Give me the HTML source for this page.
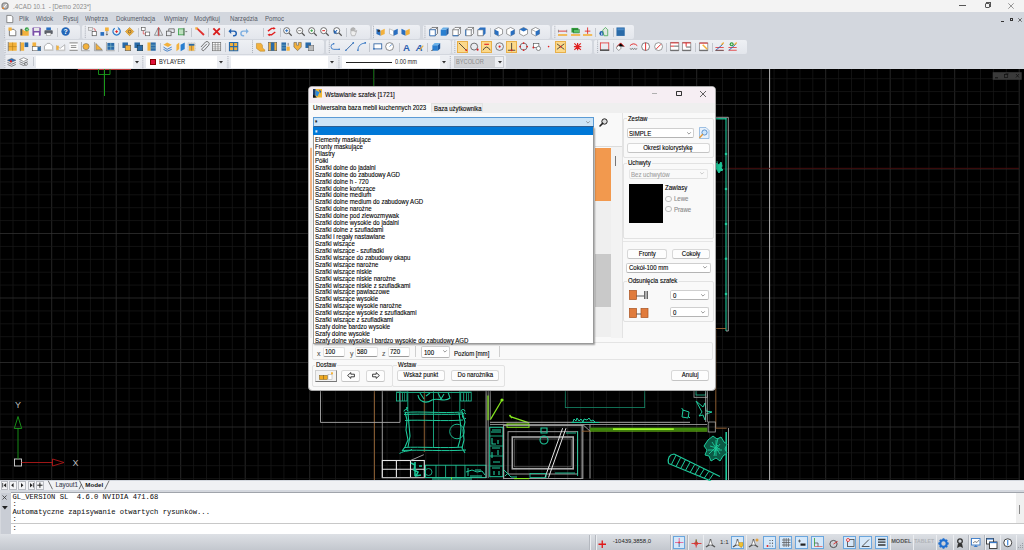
<!DOCTYPE html><html><head><meta charset="utf-8"><style>
*{margin:0;padding:0;box-sizing:border-box}
html,body{width:1024px;height:550px;overflow:hidden;background:#d3d7de;font-family:"Liberation Sans",sans-serif}
.a{position:absolute}
.t{position:absolute;white-space:pre;line-height:1}
.s{-webkit-text-stroke:0.06px currentColor}
svg{position:absolute;overflow:visible}
</style></head><body>
<div class="a" style="left:0px;top:0px;width:1024px;height:12px;background:#f3f3f3"></div>
<div class="t" style="left:13.2px;top:2.6px;font-size:7.0px;color:#8c8c8c;transform:scaleX(0.893);transform-origin:0 0">.4CAD 10.1  - [Demo 2023*]</div>
<div class="a" style="left:0px;top:12px;width:1024px;height:57px;background:#d3d7de"></div>
<div class="t" style="left:18.7px;top:15.6px;font-size:6.7px;color:#555a66;transform:scaleX(0.915);transform-origin:0 0">Plik</div>
<div class="t" style="left:36.3px;top:15.6px;font-size:6.7px;color:#555a66;transform:scaleX(0.915);transform-origin:0 0">Widok</div>
<div class="t" style="left:62.7px;top:15.6px;font-size:6.7px;color:#555a66;transform:scaleX(0.915);transform-origin:0 0">Rysuj</div>
<div class="t" style="left:84.6px;top:15.6px;font-size:6.7px;color:#555a66;transform:scaleX(0.915);transform-origin:0 0">Wnętrza</div>
<div class="t" style="left:116.2px;top:15.6px;font-size:6.7px;color:#555a66;transform:scaleX(0.915);transform-origin:0 0">Dokumentacja</div>
<div class="t" style="left:163.6px;top:15.6px;font-size:6.7px;color:#555a66;transform:scaleX(0.915);transform-origin:0 0">Wymiary</div>
<div class="t" style="left:194.4px;top:15.6px;font-size:6.7px;color:#555a66;transform:scaleX(0.915);transform-origin:0 0">Modyfikuj</div>
<div class="t" style="left:230px;top:15.6px;font-size:6.7px;color:#555a66;transform:scaleX(0.915);transform-origin:0 0">Narzędzia</div>
<div class="t" style="left:264.7px;top:15.6px;font-size:6.7px;color:#555a66;transform:scaleX(0.915);transform-origin:0 0">Pomoc</div>
<div class="a" style="left:4px;top:24.5px;width:76px;height:14.5px;background:linear-gradient(#eef0f4,#e3e6ec);border-radius:2px"></div>
<div class="a" style="left:82px;top:24.5px;width:288px;height:14.5px;background:linear-gradient(#eef0f4,#e3e6ec);border-radius:2px"></div>
<div class="a" style="left:372px;top:24.5px;width:48px;height:14.5px;background:linear-gradient(#eef0f4,#e3e6ec);border-radius:2px"></div>
<div class="a" style="left:423px;top:24.5px;width:127px;height:14.5px;background:linear-gradient(#eef0f4,#e3e6ec);border-radius:2px"></div>
<div class="a" style="left:552px;top:24.5px;width:82px;height:14.5px;background:linear-gradient(#eef0f4,#e3e6ec);border-radius:2px"></div>
<div class="a" style="left:4px;top:39.5px;width:320px;height:14px;background:linear-gradient(#eef0f4,#e3e6ec);border-radius:2px"></div>
<div class="a" style="left:326px;top:39.5px;width:125px;height:14px;background:linear-gradient(#eef0f4,#e3e6ec);border-radius:2px"></div>
<div class="a" style="left:452px;top:39.5px;width:140px;height:14px;background:linear-gradient(#eef0f4,#e3e6ec);border-radius:2px"></div>
<div class="a" style="left:594px;top:39.5px;width:153px;height:14px;background:linear-gradient(#eef0f4,#e3e6ec);border-radius:2px"></div>
<div class="a" style="left:4px;top:54.5px;width:502px;height:14px;background:linear-gradient(#eef0f4,#e3e6ec);border-radius:2px"></div>
<svg style="left:0;top:0" width="1024" height="80"><rect x="4.2" y="25.8" width="0.9" height="0.9" fill="#9da2ab"/><rect x="4.2" y="27.7" width="0.9" height="0.9" fill="#9da2ab"/><rect x="4.2" y="29.6" width="0.9" height="0.9" fill="#9da2ab"/><rect x="4.2" y="31.5" width="0.9" height="0.9" fill="#9da2ab"/><rect x="4.2" y="33.4" width="0.9" height="0.9" fill="#9da2ab"/><rect x="4.2" y="35.3" width="0.9" height="0.9" fill="#9da2ab"/><rect x="4.2" y="37.2" width="0.9" height="0.9" fill="#9da2ab"/></svg>
<svg style="left:8px;top:27.4px" width="9.2" height="9.2" viewBox="0 0 10 10"><path d="M1.5 2.5h5l2 2v5h-7z" fill="#fff" stroke="#555" stroke-width="0.8"/><rect x="0.5" y="0.5" width="3.5" height="3.5" fill="#f3b13c"/></svg>
<svg style="left:19.8px;top:27.4px" width="9.2" height="9.2" viewBox="0 0 10 10"><path d="M0.5 3h3l1 1h5v5.5h-9z" fill="#f3b13c"/><path d="M0.5 2h2v7h-2z" fill="#555"/><circle cx="7.5" cy="2.5" r="2.3" fill="#3aa34a"/><path d="M6.7 2.5l1.3 1 1-2" stroke="#fff" stroke-width="0.6" fill="none"/></svg>
<svg style="left:32px;top:27.4px" width="9.2" height="9.2" viewBox="0 0 10 10"><rect x="0.5" y="0.5" width="9" height="9" rx="0.8" fill="#7a4ea8"/><rect x="2" y="1" width="6" height="3.3" fill="#e8e8e8"/><rect x="2.5" y="6" width="5" height="3.5" fill="#fff"/></svg>
<svg style="left:44px;top:27.4px" width="9.2" height="9.2" viewBox="0 0 10 10"><rect x="2.5" y="0.5" width="5" height="3" fill="#2a6fc0"/><rect x="0.5" y="3.5" width="9" height="4" rx="0.8" fill="#5c6068"/><rect x="2.5" y="6.5" width="5" height="3" fill="#fff" stroke="#777" stroke-width="0.5"/></svg>
<div class="a" style="left:56.7px;top:28px;width:0.8px;height:9px;background:#c3c7ce"></div>
<svg style="left:60.6px;top:27.2px" width="9.2" height="9.2" viewBox="0 0 10 10"><circle cx="5" cy="5" r="4.6" fill="#2266b8"/><text x="5" y="7.8" font-size="7.5" font-weight="bold" text-anchor="middle" fill="#fff" font-family="Liberation Sans">?</text></svg>
<svg style="left:0;top:0" width="1024" height="80"><rect x="84.8" y="25.8" width="0.9" height="0.9" fill="#9da2ab"/><rect x="84.8" y="27.7" width="0.9" height="0.9" fill="#9da2ab"/><rect x="84.8" y="29.6" width="0.9" height="0.9" fill="#9da2ab"/><rect x="84.8" y="31.5" width="0.9" height="0.9" fill="#9da2ab"/><rect x="84.8" y="33.4" width="0.9" height="0.9" fill="#9da2ab"/><rect x="84.8" y="35.3" width="0.9" height="0.9" fill="#9da2ab"/><rect x="84.8" y="37.2" width="0.9" height="0.9" fill="#9da2ab"/></svg>
<svg style="left:88.2px;top:27.4px" width="9.2" height="9.2" viewBox="0 0 10 10"><rect x="0.5" y="0.5" width="4.5" height="3" fill="#eee" stroke="#888" stroke-width="0.6"/><rect x="4.5" y="5" width="4.5" height="4.5" fill="#fff" stroke="#444" stroke-width="0.7"/><path d="M6 1.5q2 0 2 3" stroke="#e02020" stroke-width="0.7" fill="none"/></svg>
<svg style="left:100.2px;top:27.4px" width="9.2" height="9.2" viewBox="0 0 10 10"><rect x="0.5" y="5.5" width="4" height="4" fill="#2a6fc0"/><rect x="5.5" y="0.5" width="4" height="4" fill="#f3b13c"/><path d="M7.5 4.5v4M6.5 7.5l1 1.5 1-1.5" stroke="#333" stroke-width="0.6" fill="none"/></svg>
<svg style="left:111.8px;top:27.4px" width="9.2" height="9.2" viewBox="0 0 10 10"><path d="M3 1.3A4 4 0 1 0 7 1.3" stroke="#2a78c8" stroke-width="1.3" fill="none"/><path d="M6.2 0.3L7.8 1.5 6.5 3" stroke="#2a78c8" stroke-width="0.9" fill="none"/><path d="M3.5 5h3M5 3.5v3" stroke="#e02020" stroke-width="1"/></svg>
<svg style="left:124.8px;top:27.4px" width="9.2" height="9.2" viewBox="0 0 10 10"><path d="M5 0.5L9.5 5L5 9.5L0.5 5z" fill="#f3b13c" stroke="#b07a10" stroke-width="0.6"/><circle cx="5" cy="5" r="1.5" fill="none" stroke="#333" stroke-width="0.6"/></svg>
<div class="a" style="left:138px;top:28px;width:0.8px;height:9px;background:#c3c7ce"></div>
<svg style="left:140.6px;top:27.4px" width="9.2" height="9.2" viewBox="0 0 10 10"><rect x="0.5" y="0.5" width="4" height="3.5" fill="#fff" stroke="#555" stroke-width="0.7"/><rect x="5" y="5.5" width="4.5" height="4" fill="#fff" stroke="#555" stroke-width="0.7"/><path d="M2.5 4v3.5h2.5" stroke="#e02020" stroke-width="0.6" fill="none"/></svg>
<svg style="left:153.8px;top:27.4px" width="9.2" height="9.2" viewBox="0 0 10 10"><path d="M4.5 1L0.5 9h4z" fill="none" stroke="#666" stroke-width="0.7"/><path d="M5.5 1L9.5 9h-4z" fill="none" stroke="#666" stroke-width="0.7"/><path d="M5 0v10" stroke="#e02020" stroke-width="0.7"/></svg>
<svg style="left:166px;top:27.4px" width="9.2" height="9.2" viewBox="0 0 10 10"><rect x="0.5" y="4.5" width="5" height="5" fill="none" stroke="#555" stroke-width="0.8"/><path d="M3 4.5v-2.5h6v4h-3.5" fill="none" stroke="#555" stroke-width="0.8"/></svg>
<svg style="left:178.4px;top:27.4px" width="9.2" height="9.2" viewBox="0 0 10 10"><rect x="0.5" y="2" width="6" height="6.5" fill="#bfe0c0" stroke="#3aa34a" stroke-width="0.9"/><path d="M6.5 1v8.5" stroke="#555" stroke-width="0.8"/><path d="M8 5h2" stroke="#555" stroke-width="0.8"/></svg>
<div class="a" style="left:190.7px;top:28px;width:0.8px;height:9px;background:#c3c7ce"></div>
<svg style="left:195px;top:27.4px" width="9.2" height="9.2" viewBox="0 0 10 10"><path d="M1 1.5l1.5-1 8 7.5-1.5 1.5z" fill="#e03030"/><rect x="0.3" y="0.3" width="2.5" height="2.5" fill="#f3b13c"/></svg>
<div class="a" style="left:208.3px;top:28px;width:0.8px;height:9px;background:#c3c7ce"></div>
<svg style="left:211.8px;top:27.4px" width="9.2" height="9.2" viewBox="0 0 10 10"><path d="M1.5 1.5l7 7M8.5 1.5l-7 7" stroke="#d81e1e" stroke-width="2"/></svg>
<div class="a" style="left:224px;top:28px;width:0.8px;height:9px;background:#c3c7ce"></div>
<svg style="left:227.6px;top:27.4px" width="9.2" height="9.2" viewBox="0 0 10 10"><path d="M2.5 4.5h4a2.5 2.5 0 0 1 0 5h-1" stroke="#1f5fb0" stroke-width="1.6" fill="none"/><path d="M0.5 4.5l3-3v6z" fill="#1f5fb0"/></svg>
<svg style="left:240px;top:27.4px" width="9.2" height="9.2" viewBox="0 0 10 10"><path d="M7.5 4.5h-4a2.5 2.5 0 0 0 0 5h1" stroke="#7fb0e0" stroke-width="1.6" fill="none"/><path d="M9.5 4.5l-3-3v6z" fill="#7fb0e0"/></svg>
<div class="a" style="left:263px;top:28px;width:0.8px;height:9px;background:#c3c7ce"></div>
<svg style="left:266.7px;top:27.4px" width="9.2" height="9.2" viewBox="0 0 10 10"><path d="M1 4.5l4-3h3" stroke="#e02020" stroke-width="1.5" fill="none"/><path d="M9 5.5l-4 3h-3" stroke="#e02020" stroke-width="1.5" fill="none"/><path d="M7 0l2.5 1.5L7 3z M3 10L0.5 8.5 3 7z" fill="#e02020"/></svg>
<div class="a" style="left:280px;top:28px;width:0.8px;height:9px;background:#c3c7ce"></div>
<svg style="left:283.4px;top:27.4px" width="9.2" height="9.2" viewBox="0 0 10 10"><circle cx="4" cy="4" r="3.3" fill="#fff" stroke="#555" stroke-width="0.9"/><path d="M6.5 6.5l3 3" stroke="#555" stroke-width="1.3"/><path d="M2.3 4h3.4M4 2.3v3.4" stroke="#2a6fc0" stroke-width="1"/></svg>
<svg style="left:295.7px;top:27.4px" width="9.2" height="9.2" viewBox="0 0 10 10"><circle cx="4" cy="4" r="3.3" fill="#fff" stroke="#555" stroke-width="0.9"/><path d="M6.5 6.5l3 3" stroke="#555" stroke-width="1.3"/><path d="M2.3 4h3.4" stroke="#888" stroke-width="1"/></svg>
<svg style="left:308px;top:27.4px" width="9.2" height="9.2" viewBox="0 0 10 10"><circle cx="4" cy="4" r="3.3" fill="#fff" stroke="#555" stroke-width="0.9"/><path d="M6.5 6.5l3 3" stroke="#555" stroke-width="1.3"/><path d="M2.5 4h3M4 2.5v3" stroke="#3aa34a" stroke-width="1"/></svg>
<svg style="left:320.3px;top:27.4px" width="9.2" height="9.2" viewBox="0 0 10 10"><circle cx="4" cy="4" r="3.3" fill="#fff" stroke="#555" stroke-width="0.9"/><path d="M6.5 6.5l3 3" stroke="#555" stroke-width="1.3"/><path d="M2.5 4h3" stroke="#e02020" stroke-width="1.1"/></svg>
<svg style="left:332.6px;top:27.4px" width="9.2" height="9.2" viewBox="0 0 10 10"><circle cx="4" cy="4" r="3.3" fill="#fff" stroke="#555" stroke-width="0.9"/><path d="M6.5 6.5l3 3" stroke="#555" stroke-width="1.3"/><path d="M1.5 6.5l3-3M1.5 3.5v3h3" stroke="#1f5fb0" stroke-width="1.1" fill="none"/></svg>
<div class="a" style="left:345.8px;top:28px;width:0.8px;height:9px;background:#c3c7ce"></div>
<svg style="left:349.3px;top:27.4px" width="9.2" height="9.2" viewBox="0 0 10 10"><path d="M2 5v-3h1v2.5V1h1.2v3.5V0.8h1.2v3.7V1.5h1.1v4l1-1.5h1L6.5 9.5h-3.5L2 7z" fill="#eee" stroke="#999" stroke-width="0.6"/></svg>
<svg style="left:0;top:0" width="1024" height="80"><rect x="373" y="25.8" width="0.9" height="0.9" fill="#9da2ab"/><rect x="373" y="27.7" width="0.9" height="0.9" fill="#9da2ab"/><rect x="373" y="29.6" width="0.9" height="0.9" fill="#9da2ab"/><rect x="373" y="31.5" width="0.9" height="0.9" fill="#9da2ab"/><rect x="373" y="33.4" width="0.9" height="0.9" fill="#9da2ab"/><rect x="373" y="35.3" width="0.9" height="0.9" fill="#9da2ab"/><rect x="373" y="37.2" width="0.9" height="0.9" fill="#9da2ab"/></svg>
<svg style="left:375.7px;top:27.4px" width="9.2" height="9.2" viewBox="0 0 10 10"><path d="M0.5 2l4.5 2v5.5l-4.5-2z" fill="#2a6fc0"/><path d="M5 4l4.5-2v5.5L5 9.5z" fill="#f3b13c"/><circle cx="3" cy="4" r="1.4" fill="#333"/></svg>
<svg style="left:388.8px;top:27.4px" width="9.2" height="9.2" viewBox="0 0 10 10"><path d="M0.5 2l4.5 2v5.5l-4.5-2z" fill="#fff" stroke="#888" stroke-width="0.5"/><path d="M5 4l4.5-2v5.5L5 9.5z" fill="#2a6fc0"/></svg>
<svg style="left:400.5px;top:27.4px" width="9.2" height="9.2" viewBox="0 0 10 10"><path d="M0.5 2l4.5 2v5.5l-4.5-2z" fill="#2a6fc0"/><path d="M5 4l4.5-2v5.5L5 9.5z" fill="#f3b13c"/></svg>
<svg style="left:0;top:0" width="1024" height="80"><rect x="424.5" y="25.8" width="0.9" height="0.9" fill="#9da2ab"/><rect x="424.5" y="27.7" width="0.9" height="0.9" fill="#9da2ab"/><rect x="424.5" y="29.6" width="0.9" height="0.9" fill="#9da2ab"/><rect x="424.5" y="31.5" width="0.9" height="0.9" fill="#9da2ab"/><rect x="424.5" y="33.4" width="0.9" height="0.9" fill="#9da2ab"/><rect x="424.5" y="35.3" width="0.9" height="0.9" fill="#9da2ab"/><rect x="424.5" y="37.2" width="0.9" height="0.9" fill="#9da2ab"/></svg>
<svg style="left:428.6px;top:27.4px" width="9.2" height="9.2" viewBox="0 0 10 10"><path d="M0.8 3h6v6.5h-6z M0.8 3l2.5-2.5h6l-2.5 2.5 M6.8 9.5l2.5-2.5v-6.5" fill="none" stroke="#444" stroke-width="0.7"/><path d="M0.8 3h6v6.5h-6z" fill="#fff" stroke="#2a6fc0" stroke-width="0.8"/></svg>
<svg style="left:440.4px;top:27.4px" width="9.2" height="9.2" viewBox="0 0 10 10"><path d="M0.8 3h6v6.5h-6z" fill="#2a7fd0"/><path d="M0.8 3l2.5-2.5h6l-2.5 2.5z" fill="#66aee8"/><path d="M6.8 3l2.5-2.5v6.5l-2.5 2.5z" fill="#1d5aa0"/></svg>
<svg style="left:452.3px;top:27.4px" width="9.2" height="9.2" viewBox="0 0 10 10"><path d="M0.8 3h6v6.5h-6z M0.8 3l2.5-2.5h6l-2.5 2.5 M6.8 9.5l2.5-2.5v-6.5" fill="#fff" stroke="#555" stroke-width="0.7"/><path d="M0.8 9.5h6" stroke="#2a6fc0" stroke-width="1"/></svg>
<svg style="left:465px;top:27.4px" width="9.2" height="9.2" viewBox="0 0 10 10"><path d="M0.8 3h6v6.5h-6z M0.8 3l2.5-2.5h6l-2.5 2.5 M6.8 9.5l2.5-2.5v-6.5" fill="#fff" stroke="#555" stroke-width="0.7"/><path d="M0.8 3v6.5" stroke="#2a6fc0" stroke-width="1"/></svg>
<svg style="left:477px;top:27.4px" width="9.2" height="9.2" viewBox="0 0 10 10"><path d="M0.8 3h6v6.5h-6z" fill="#fff" stroke="#555" stroke-width="0.7"/><path d="M0.8 3l2.5-2.5h6l-2.5 2.5z M6.8 3l2.5-2.5v6.5l-2.5 2.5z" fill="#2a6fc0"/></svg>
<div class="a" style="left:490px;top:28px;width:0.8px;height:9px;background:#c3c7ce"></div>
<svg style="left:494.2px;top:27.4px" width="9.2" height="9.2" viewBox="0 0 10 10"><path d="M5 0.5l4.3 2.2v4.8L5 9.7 0.7 7.5V2.7z" fill="#fff" stroke="#555" stroke-width="0.6"/><path d="M0.7 2.7L5 5v4.7L0.7 7.5z" fill="#2a6fc0"/></svg>
<svg style="left:506px;top:27.4px" width="9.2" height="9.2" viewBox="0 0 10 10"><path d="M5 0.5l4.3 2.2v4.8L5 9.7 0.7 7.5V2.7z" fill="#fff" stroke="#555" stroke-width="0.6"/><path d="M9.3 2.7L5 5v4.7l4.3-2.2z" fill="#2a6fc0"/></svg>
<svg style="left:519px;top:27.4px" width="9.2" height="9.2" viewBox="0 0 10 10"><path d="M5 0.5l4.3 2.2v4.8L5 9.7 0.7 7.5V2.7z" fill="#fff" stroke="#555" stroke-width="0.6"/><path d="M0.7 2.7L5 0.5l4.3 2.2L5 5z" fill="#2a6fc0"/></svg>
<svg style="left:530.8px;top:27.4px" width="9.2" height="9.2" viewBox="0 0 10 10"><path d="M5 0.5l4.3 2.2v4.8L5 9.7 0.7 7.5V2.7z" fill="#fff" stroke="#555" stroke-width="0.6"/><path d="M5 5l4.3-2.3v4.8L5 9.7z" fill="#2a6fc0"/><path d="M0.7 2.7L5 5" stroke="#555" stroke-width="0.5"/></svg>
<svg style="left:0;top:0" width="1024" height="80"><rect x="554.4" y="25.8" width="0.9" height="0.9" fill="#9da2ab"/><rect x="554.4" y="27.7" width="0.9" height="0.9" fill="#9da2ab"/><rect x="554.4" y="29.6" width="0.9" height="0.9" fill="#9da2ab"/><rect x="554.4" y="31.5" width="0.9" height="0.9" fill="#9da2ab"/><rect x="554.4" y="33.4" width="0.9" height="0.9" fill="#9da2ab"/><rect x="554.4" y="35.3" width="0.9" height="0.9" fill="#9da2ab"/><rect x="554.4" y="37.2" width="0.9" height="0.9" fill="#9da2ab"/></svg>
<svg style="left:557.8px;top:27.4px" width="9.2" height="9.2" viewBox="0 0 10 10"><path d="M0.5 4.5h9" stroke="#e02020" stroke-width="0.9"/><path d="M0.5 3v3M9.5 3v3" stroke="#555" stroke-width="0.6"/><rect x="0" y="7.8" width="10" height="1.8" fill="#f3b13c"/></svg>
<svg style="left:570.5px;top:27.4px" width="9.2" height="9.2" viewBox="0 0 10 10"><rect x="0.5" y="1" width="7.5" height="5" fill="#2f9a3a"/><rect x="3" y="3" width="6" height="3.5" fill="#5bc26a" stroke="#1e6a26" stroke-width="0.5"/><rect x="0" y="7.8" width="10" height="1.8" fill="#f3b13c"/></svg>
<svg style="left:582.6px;top:27.4px" width="9.2" height="9.2" viewBox="0 0 10 10"><path d="M5 0.5v7M2 4.5h6" stroke="#e02020" stroke-width="0.9"/><rect x="0" y="7.8" width="10" height="1.8" fill="#f3b13c"/></svg>
<div class="a" style="left:595.3px;top:28px;width:0.8px;height:9px;background:#c3c7ce"></div>
<svg style="left:598.5px;top:27.4px" width="9.2" height="9.2" viewBox="0 0 10 10"><circle cx="3" cy="7" r="2.6" fill="#1f5fb0"/><path d="M3 6v3" stroke="#fff" stroke-width="0.9"/><path d="M4 3.5l3-3 2.5 2.5v6.5h-4z" fill="#e0e8e0" stroke="#3aa34a" stroke-width="0.8"/></svg>
<div class="a" style="left:612.5px;top:28px;width:0.8px;height:9px;background:#c3c7ce"></div>
<svg style="left:615.7px;top:27.4px" width="9.2" height="9.2" viewBox="0 0 10 10"><rect x="0.5" y="0.5" width="9" height="9.2" fill="#2a6aa8"/><rect x="1.5" y="1.5" width="7" height="2" fill="#4a8ac8"/></svg>
<svg style="left:0;top:0" width="1024" height="80"><rect x="4.6" y="40.5" width="0.9" height="0.9" fill="#9da2ab"/><rect x="4.6" y="42.4" width="0.9" height="0.9" fill="#9da2ab"/><rect x="4.6" y="44.3" width="0.9" height="0.9" fill="#9da2ab"/><rect x="4.6" y="46.2" width="0.9" height="0.9" fill="#9da2ab"/><rect x="4.6" y="48.1" width="0.9" height="0.9" fill="#9da2ab"/><rect x="4.6" y="50.0" width="0.9" height="0.9" fill="#9da2ab"/><rect x="4.6" y="51.9" width="0.9" height="0.9" fill="#9da2ab"/></svg>
<svg style="left:7.8px;top:42.2px" width="9.2" height="9.2" viewBox="0 0 10 10"><rect x="0.5" y="0.5" width="9" height="9" fill="#f3b13c"/><path d="M5 0.5v9M0.5 5h9" stroke="#b07a10" stroke-width="0.6"/><path d="M0.3 0v10" stroke="#555" stroke-width="0.7"/></svg>
<svg style="left:19.5px;top:42.2px" width="9.2" height="9.2" viewBox="0 0 10 10"><rect x="0.5" y="0.5" width="4" height="9" fill="#f3b13c"/><rect x="5" y="0.5" width="4" height="5" fill="#2a6aa8"/><path d="M0.3 0v10" stroke="#555" stroke-width="0.7"/></svg>
<svg style="left:32px;top:42.2px" width="9.2" height="9.2" viewBox="0 0 10 10"><rect x="0.5" y="0.5" width="4" height="5" fill="#f3b13c"/><rect x="0.5" y="5" width="9" height="4.5" fill="#fff" stroke="#555" stroke-width="0.6"/><rect x="6" y="5.5" width="3.5" height="4" fill="#2a6aa8"/></svg>
<svg style="left:43.9px;top:42.2px" width="9.2" height="9.2" viewBox="0 0 10 10"><path d="M0.5 9.5v-5l3-3h3l3 3v5" fill="#fff" stroke="#888" stroke-width="0.7"/><rect x="0" y="8" width="10" height="1.8" fill="#c9c9c9"/></svg>
<svg style="left:56px;top:42.2px" width="9.2" height="9.2" viewBox="0 0 10 10"><path d="M0.5 9v-5l4 3 5-4v6z" fill="#fff" stroke="#888" stroke-width="0.6"/><rect x="0.5" y="4" width="2.5" height="5.5" fill="#f3b13c"/><rect x="0" y="8.5" width="10" height="1.5" fill="#c9c9c9"/></svg>
<svg style="left:68.8px;top:42.2px" width="9.2" height="9.2" viewBox="0 0 10 10"><rect x="0.5" y="0.5" width="9" height="9" fill="#fff"/><path d="M0.5 1h9M0.5 9h9" stroke="#999" stroke-width="1.4"/><path d="M2 4h6M2 6h6" stroke="#555" stroke-width="0.7"/></svg>
<svg style="left:81px;top:42.2px" width="9.2" height="9.2" viewBox="0 0 10 10"><path d="M0.5 0v9.5h9" stroke="#888" stroke-width="0.7" fill="none"/><circle cx="5.5" cy="5" r="3.4" fill="#f3b13c" stroke="#555" stroke-width="0.5"/></svg>
<svg style="left:93.8px;top:42.2px" width="9.2" height="9.2" viewBox="0 0 10 10"><path d="M0.5 0v9.5h9" stroke="#888" stroke-width="0.7" fill="none"/><path d="M2 1.5v7h7z" fill="#f3b13c" stroke="#555" stroke-width="0.5"/></svg>
<svg style="left:105.5px;top:42.2px" width="9.2" height="9.2" viewBox="0 0 10 10"><path d="M0.5 0v9.5h9" stroke="#888" stroke-width="0.7" fill="none"/><rect x="1.5" y="1" width="7.5" height="7.5" fill="#2a6aa8"/><path d="M5.2 1v7.5M1.5 4.7h7.5" stroke="#9cc" stroke-width="0.6"/></svg>
<div class="a" style="left:118px;top:43px;width:0.8px;height:8.5px;background:#c3c7ce"></div>
<svg style="left:121.9px;top:42.2px" width="9.2" height="9.2" viewBox="0 0 10 10"><rect x="0.5" y="0.5" width="6" height="6" fill="#2a6aa8"/><rect x="3.5" y="3.5" width="6" height="6" fill="#f3b13c" stroke="#555" stroke-width="0.6"/></svg>
<svg style="left:134.4px;top:42.2px" width="9.2" height="9.2" viewBox="0 0 10 10"><rect x="0.5" y="0.5" width="6" height="6" fill="#2a6aa8"/><rect x="3.5" y="3.5" width="6" height="6" fill="#2a6aa8" stroke="#134" stroke-width="0.6"/></svg>
<svg style="left:146.9px;top:42.2px" width="9.2" height="9.2" viewBox="0 0 10 10"><rect x="0.5" y="0.5" width="3.5" height="9" fill="#f3b13c"/><rect x="4" y="0.5" width="5.5" height="9" fill="#2a6aa8"/><path d="M4 3.5h5.5M4 6.5h5.5" stroke="#9cc" stroke-width="0.6"/></svg>
<div class="a" style="left:159.7px;top:43px;width:0.8px;height:8.5px;background:#c3c7ce"></div>
<svg style="left:163px;top:42.2px" width="9.2" height="9.2" viewBox="0 0 10 10"><path d="M0.5 3l4-2.5 5 2.5-4 2.5z" fill="#f3b13c"/><path d="M0.5 5.5l4 2.5 5-2.5M0.5 8l4 2 5-2" stroke="#2a6fc0" stroke-width="0.9" fill="none"/></svg>
<svg style="left:175.5px;top:42.2px" width="9.2" height="9.2" viewBox="0 0 10 10"><path d="M0.5 3l3-2.5v7l-3 2.5z" fill="#f3b13c"/><path d="M5 3l4.5-2.5v7L5 10z" fill="#2a7fd0"/></svg>
<svg style="left:187px;top:42.2px" width="9.2" height="9.2" viewBox="0 0 10 10"><rect x="1" y="1" width="8" height="8.5" fill="none" stroke="#999" stroke-width="0.5" stroke-dasharray="1 0.7"/><rect x="2" y="2" width="6" height="7.5" fill="#f3b13c"/><rect x="2" y="2" width="6" height="2" fill="#2a6aa8"/><path d="M5 4v5.5" stroke="#555" stroke-width="0.5"/></svg>
<svg style="left:200px;top:42.2px" width="9.2" height="9.2" viewBox="0 0 10 10"><path d="M7.5 2L2.5 7a1.3 1.3 0 0 0 2 2l5-5.5a2.5 2.5 0 0 0-3.5-3.5L1 5.5" stroke="#666" stroke-width="1" fill="none"/></svg>
<svg style="left:212.2px;top:42.2px" width="9.2" height="9.2" viewBox="0 0 10 10"><rect x="0.5" y="0.5" width="9" height="9" fill="#fff" stroke="#666" stroke-width="0.7"/><path d="M0.5 3h9M0.5 5.3h9M0.5 7.5h9M3.5 0.5v9M6.5 0.5v9" stroke="#666" stroke-width="0.6"/></svg>
<div class="a" style="left:224.7px;top:43px;width:0.8px;height:8.5px;background:#c3c7ce"></div>
<svg style="left:229px;top:42.2px" width="9.2" height="9.2" viewBox="0 0 10 10"><rect x="0.5" y="0.5" width="9" height="9" fill="#f3b13c"/><path d="M0.5 0.5h9v9h-9z M5 0.5v9M0.5 5h9" stroke="#2a6aa8" stroke-width="1.2" fill="none"/></svg>
<svg style="left:0;top:0" width="1024" height="80"><rect x="252" y="40.5" width="0.9" height="0.9" fill="#9da2ab"/><rect x="252" y="42.4" width="0.9" height="0.9" fill="#9da2ab"/><rect x="252" y="44.3" width="0.9" height="0.9" fill="#9da2ab"/><rect x="252" y="46.2" width="0.9" height="0.9" fill="#9da2ab"/><rect x="252" y="48.1" width="0.9" height="0.9" fill="#9da2ab"/><rect x="252" y="50.0" width="0.9" height="0.9" fill="#9da2ab"/><rect x="252" y="51.9" width="0.9" height="0.9" fill="#9da2ab"/></svg>
<svg style="left:256px;top:42.2px" width="9.2" height="9.2" viewBox="0 0 10 10"><path d="M0.5 1.5h5l1.5 2v3l2.5 2v1.5h-5l-4-3z" fill="#f3b13c" stroke="#b07a10" stroke-width="0.5"/></svg>
<svg style="left:268px;top:42.2px" width="9.2" height="9.2" viewBox="0 0 10 10"><rect x="0.5" y="0.5" width="9" height="9" fill="#f3b13c" stroke="#555" stroke-width="0.6"/><rect x="3" y="0.5" width="4" height="9" fill="#2a6aa8"/></svg>
<svg style="left:280.5px;top:42.2px" width="9.2" height="9.2" viewBox="0 0 10 10"><rect x="0.5" y="0.5" width="5" height="9" fill="#2a6aa8"/><path d="M0.5 3.5h5M0.5 6.5h5" stroke="#9cc" stroke-width="0.6"/><rect x="6" y="5" width="3.5" height="4.5" fill="#f3b13c"/><path d="M7.8 1v3" stroke="#333" stroke-width="0.6"/></svg>
<svg style="left:292.5px;top:42.2px" width="9.2" height="9.2" viewBox="0 0 10 10"><path d="M1 0.5h3v3h2v-3h3v5l-4 4-4-4z" fill="#f3b13c" stroke="#555" stroke-width="0.6"/></svg>
<svg style="left:304.7px;top:42.2px" width="9.2" height="9.2" viewBox="0 0 10 10"><rect x="0.5" y="0.5" width="6" height="6" fill="#2a6aa8"/><rect x="4" y="4" width="5.5" height="5.5" fill="#bbb" stroke="#666" stroke-width="0.6"/></svg>
<svg style="left:0;top:0" width="1024" height="80"><rect x="328.8" y="40.5" width="0.9" height="0.9" fill="#9da2ab"/><rect x="328.8" y="42.4" width="0.9" height="0.9" fill="#9da2ab"/><rect x="328.8" y="44.3" width="0.9" height="0.9" fill="#9da2ab"/><rect x="328.8" y="46.2" width="0.9" height="0.9" fill="#9da2ab"/><rect x="328.8" y="48.1" width="0.9" height="0.9" fill="#9da2ab"/><rect x="328.8" y="50.0" width="0.9" height="0.9" fill="#9da2ab"/><rect x="328.8" y="51.9" width="0.9" height="0.9" fill="#9da2ab"/></svg>
<svg style="left:331.4px;top:42.2px" width="9.2" height="9.2" viewBox="0 0 10 10"><path d="M3 2a3 3 0 0 0 0 6h6" stroke="#2a6fc0" stroke-width="0.9" fill="none"/><circle cx="3" cy="2" r="0.8" fill="#2a6fc0"/><circle cx="9" cy="8" r="0.8" fill="#2a6fc0"/></svg>
<svg style="left:344.6px;top:42.2px" width="9.2" height="9.2" viewBox="0 0 10 10"><path d="M1 9L9 1" stroke="#2a5fa0" stroke-width="1"/><circle cx="1" cy="9" r="0.9" fill="#2a6fc0"/><circle cx="9" cy="1" r="0.9" fill="#2a6fc0"/></svg>
<svg style="left:357px;top:42.2px" width="9.2" height="9.2" viewBox="0 0 10 10"><path d="M1 9q0-7 8-8" stroke="#2a6fc0" stroke-width="0.9" fill="none"/><circle cx="1" cy="9" r="0.9" fill="#2a6fc0"/><circle cx="9" cy="1" r="0.9" fill="#2a6fc0"/></svg>
<div class="a" style="left:369px;top:43px;width:0.8px;height:8.5px;background:#c3c7ce"></div>
<svg style="left:372.7px;top:42.2px" width="9.2" height="9.2" viewBox="0 0 10 10"><rect x="1" y="2" width="8.5" height="5.5" fill="#fff" stroke="#2a5fa0" stroke-width="0.9"/><circle cx="1" cy="7.5" r="0.9" fill="#2a6fc0"/></svg>
<svg style="left:385px;top:42.2px" width="9.2" height="9.2" viewBox="0 0 10 10"><circle cx="5" cy="5" r="4.3" fill="#fff" stroke="#666" stroke-width="0.8"/><path d="M5 5l2.5-2.5" stroke="#2a6fc0" stroke-width="0.8"/></svg>
<div class="a" style="left:399px;top:43px;width:0.8px;height:8.5px;background:#c3c7ce"></div>
<svg style="left:401.5px;top:42.2px" width="9.2" height="9.2" viewBox="0 0 10 10"><text x="5" y="9.5" font-size="10.5" font-weight="bold" text-anchor="middle" fill="#2a5fb0" font-family="Liberation Sans">A</text></svg>
<svg style="left:414.5px;top:42.2px" width="9.2" height="9.2" viewBox="0 0 10 10"><text x="4.5" y="9.5" font-size="10.5" font-weight="bold" font-style="italic" text-anchor="middle" fill="#2a5fb0" font-family="Liberation Sans">A</text><path d="M5 9l4-5" stroke="#f3b13c" stroke-width="1.2"/></svg>
<div class="a" style="left:427px;top:43px;width:0.8px;height:8.5px;background:#c3c7ce"></div>
<svg style="left:430.7px;top:42.2px" width="9.2" height="9.2" viewBox="0 0 10 10"><path d="M1.5 3.5h6v6h-6z" fill="#2a7fd0"/><path d="M1.5 3.5l2.5-2.5h6l-2.5 2.5z" fill="#6ab2ea"/><path d="M7.5 3.5l2.5-2.5v6l-2.5 2.5z" fill="#1d5aa0"/><path d="M0.5 9.8l1.5-1.5" stroke="#333" stroke-width="1"/></svg>
<svg style="left:0;top:0" width="1024" height="80"><rect x="454.4" y="40.5" width="0.9" height="0.9" fill="#9da2ab"/><rect x="454.4" y="42.4" width="0.9" height="0.9" fill="#9da2ab"/><rect x="454.4" y="44.3" width="0.9" height="0.9" fill="#9da2ab"/><rect x="454.4" y="46.2" width="0.9" height="0.9" fill="#9da2ab"/><rect x="454.4" y="48.1" width="0.9" height="0.9" fill="#9da2ab"/><rect x="454.4" y="50.0" width="0.9" height="0.9" fill="#9da2ab"/><rect x="454.4" y="51.9" width="0.9" height="0.9" fill="#9da2ab"/></svg>
<div class="a" style="left:456.5px;top:40.900000000000006px;width:11.799999999999999px;height:11.799999999999999px;background:#fcd98a;border:0.8px solid #e8b04a"></div>
<svg style="left:457.8px;top:42.2px" width="9.2" height="9.2" viewBox="0 0 10 10"><path d="M1 1l8 8" stroke="#333" stroke-width="0.9"/><circle cx="9" cy="9" r="1" fill="#e02020"/></svg>
<svg style="left:470px;top:42.2px" width="9.2" height="9.2" viewBox="0 0 10 10"><circle cx="4.5" cy="5" r="3.8" fill="none" stroke="#555" stroke-width="0.9"/><circle cx="8.3" cy="8.3" r="1.1" fill="#e02020"/></svg>
<div class="a" style="left:480.5px;top:40.900000000000006px;width:11.799999999999999px;height:11.799999999999999px;background:#fcd98a;border:0.8px solid #e8b04a"></div>
<svg style="left:481.8px;top:42.2px" width="9.2" height="9.2" viewBox="0 0 10 10"><path d="M1 9q4-7 8 0" stroke="#333" stroke-width="0.9" fill="none"/><path d="M2.5 2.5h5" stroke="#e02020" stroke-width="1.2"/></svg>
<svg style="left:495.3px;top:42.2px" width="9.2" height="9.2" viewBox="0 0 10 10"><circle cx="5" cy="5" r="4.2" fill="none" stroke="#555" stroke-width="0.8"/><circle cx="5" cy="5" r="1.2" fill="#e02020"/></svg>
<div class="a" style="left:505.5px;top:40.900000000000006px;width:11.799999999999999px;height:11.799999999999999px;background:#fcd98a;border:0.8px solid #e8b04a"></div>
<svg style="left:506.8px;top:42.2px" width="9.2" height="9.2" viewBox="0 0 10 10"><path d="M5 1v8M1 9h8" stroke="#333" stroke-width="0.9"/><circle cx="5" cy="9" r="1" fill="#e02020"/></svg>
<svg style="left:519.2px;top:42.2px" width="9.2" height="9.2" viewBox="0 0 10 10"><circle cx="5" cy="5" r="3.8" fill="none" stroke="#555" stroke-width="0.8"/><circle cx="5" cy="1.2" r="1" fill="#e02020"/><circle cx="1.2" cy="5" r="1" fill="#e02020"/><circle cx="8.8" cy="5" r="1" fill="#e02020"/><circle cx="5" cy="8.8" r="1" fill="#e02020"/></svg>
<svg style="left:531.5px;top:42.2px" width="9.2" height="9.2" viewBox="0 0 10 10"><rect x="1.5" y="1.5" width="6" height="4.5" fill="#fff" stroke="#555" stroke-width="0.7"/><circle cx="7" cy="7" r="2.3" fill="#fff" stroke="#555" stroke-width="0.7"/><circle cx="1.5" cy="6" r="1" fill="#e02020"/></svg>
<svg style="left:543.5px;top:42.2px" width="9.2" height="9.2" viewBox="0 0 10 10"><circle cx="5" cy="5" r="0.9" fill="#e02020"/></svg>
<div class="a" style="left:554.7px;top:40.900000000000006px;width:11.799999999999999px;height:11.799999999999999px;background:#fcd98a;border:0.8px solid #e8b04a"></div>
<svg style="left:556px;top:42.2px" width="9.2" height="9.2" viewBox="0 0 10 10"><path d="M1 2l8 6M9 2L1 8" stroke="#333" stroke-width="0.9"/><circle cx="5" cy="5" r="1" fill="#e02020"/></svg>
<svg style="left:572.8px;top:42.2px" width="9.2" height="9.2" viewBox="0 0 10 10"><path d="M1.5 1.5l7 7M8.5 1.5l-7 7M5 1v8M1 5h8" stroke="#e02020" stroke-width="1.3"/></svg>
<svg style="left:0;top:0" width="1024" height="80"><rect x="597.2" y="40.5" width="0.9" height="0.9" fill="#9da2ab"/><rect x="597.2" y="42.4" width="0.9" height="0.9" fill="#9da2ab"/><rect x="597.2" y="44.3" width="0.9" height="0.9" fill="#9da2ab"/><rect x="597.2" y="46.2" width="0.9" height="0.9" fill="#9da2ab"/><rect x="597.2" y="48.1" width="0.9" height="0.9" fill="#9da2ab"/><rect x="597.2" y="50.0" width="0.9" height="0.9" fill="#9da2ab"/><rect x="597.2" y="51.9" width="0.9" height="0.9" fill="#9da2ab"/></svg>
<svg style="left:599.6px;top:42.2px" width="9.2" height="9.2" viewBox="0 0 10 10"><path d="M0.5 0.5v9M9.5 0.5v9" stroke="#e02020" stroke-width="0.8"/><path d="M0.5 1h9" stroke="#e02020" stroke-width="0.8"/><rect x="0" y="8" width="10" height="1.8" fill="#555"/></svg>
<div class="a" style="left:613px;top:43px;width:0.8px;height:8.5px;background:#c3c7ce"></div>
<svg style="left:615.8px;top:42.2px" width="9.2" height="9.2" viewBox="0 0 10 10"><path d="M1 5l4-4 4 4" stroke="#e02020" stroke-width="1"/><rect x="1" y="4.5" width="4" height="4" transform="rotate(45 3 6.5)" fill="#fff" stroke="#555" stroke-width="0.6"/></svg>
<svg style="left:628.8px;top:42.2px" width="9.2" height="9.2" viewBox="0 0 10 10"><path d="M1 4q4-4 8 0" stroke="#e02020" stroke-width="1" fill="none"/><path d="M1 6.5l1.3 2 1.3-2 1.3 2 1.3-2 1.3 2 1.3-2" stroke="#555" stroke-width="0.6" fill="none"/></svg>
<svg style="left:641px;top:42.2px" width="9.2" height="9.2" viewBox="0 0 10 10"><circle cx="5" cy="5" r="4.3" fill="#fff" stroke="#555" stroke-width="0.8"/><path d="M5 0.8v8.4" stroke="#e02020" stroke-width="1"/></svg>
<svg style="left:653.8px;top:42.2px" width="9.2" height="9.2" viewBox="0 0 10 10"><circle cx="5" cy="5" r="4.3" fill="#fff" stroke="#777" stroke-width="0.8"/><path d="M2.5 7.5L7.5 2.5" stroke="#e02020" stroke-width="1"/></svg>
<div class="a" style="left:665.7px;top:43px;width:0.8px;height:8.5px;background:#c3c7ce"></div>
<svg style="left:670.4px;top:42.2px" width="9.2" height="9.2" viewBox="0 0 10 10"><path d="M0.5 0.5h9v9h-9z" fill="#fff" stroke="#555" stroke-width="0.6"/><path d="M0.5 1h9M0.5 4.5h4" stroke="#e02020" stroke-width="1"/><path d="M4.5 4.5h5M0.5 9h9" stroke="#555" stroke-width="1"/></svg>
<svg style="left:682.2px;top:42.2px" width="9.2" height="9.2" viewBox="0 0 10 10"><path d="M0.5 0.5h9v9h-9z" fill="#fff" stroke="#555" stroke-width="0.6"/><path d="M0.5 1h9M4.5 1v4" stroke="#e02020" stroke-width="1"/><path d="M4.5 5.5h5M0.5 9h9" stroke="#555" stroke-width="1"/></svg>
<div class="a" style="left:695.2px;top:43px;width:0.8px;height:8.5px;background:#c3c7ce"></div>
<svg style="left:698.7px;top:42.2px" width="9.2" height="9.2" viewBox="0 0 10 10"><path d="M0.5 1h9v8.5h-9z" fill="#fff" stroke="#555" stroke-width="0.6"/><path d="M0.5 1.2h9" stroke="#e02020" stroke-width="1"/><path d="M4 3l5 5" stroke="#f3b13c" stroke-width="1.6"/><path d="M0.5 9h9" stroke="#555" stroke-width="1"/></svg>
<div class="a" style="left:711.6px;top:43px;width:0.8px;height:8.5px;background:#c3c7ce"></div>
<svg style="left:715px;top:42.2px" width="9.2" height="9.2" viewBox="0 0 10 10"><path d="M0.5 6h9M0.5 9h9" stroke="#e02020" stroke-width="0.8"/><path d="M1 9l8-7" stroke="#2a5fb0" stroke-width="1"/><path d="M7 3l2.5-2.5" stroke="#f3b13c" stroke-width="1.4"/><path d="M0.5 9.3h9" stroke="#555" stroke-width="0.8"/></svg>
<svg style="left:728px;top:42.2px" width="9.2" height="9.2" viewBox="0 0 10 10"><path d="M0.5 6h9M0.5 9h9" stroke="#e02020" stroke-width="0.8"/><path d="M1 9l8-7" stroke="#2a5fb0" stroke-width="1"/><path d="M7 3l2.5-2.5" stroke="#f3b13c" stroke-width="1.4"/><circle cx="4" cy="2.5" r="2.2" fill="#2a9a3a"/><path d="M3 2.5h2M4 1.5v2" stroke="#fff" stroke-width="0.7"/></svg>
<svg style="left:0;top:0" width="1024" height="80"><rect x="4.4" y="55.5" width="0.9" height="0.9" fill="#9da2ab"/><rect x="4.4" y="57.4" width="0.9" height="0.9" fill="#9da2ab"/><rect x="4.4" y="59.3" width="0.9" height="0.9" fill="#9da2ab"/><rect x="4.4" y="61.2" width="0.9" height="0.9" fill="#9da2ab"/><rect x="4.4" y="63.1" width="0.9" height="0.9" fill="#9da2ab"/><rect x="4.4" y="65.0" width="0.9" height="0.9" fill="#9da2ab"/><rect x="4.4" y="66.9" width="0.9" height="0.9" fill="#9da2ab"/></svg>
<svg style="left:6.9px;top:56.6px" width="9.3" height="9.3" viewBox="0 0 10 10"><path d="M0.5 3.5L5 1.5l4.5 2L5 5.5z" fill="#2a6fc0" stroke="#444" stroke-width="0.5"/><circle cx="4.2" cy="4.8" r="1.2" fill="#e02020"/><path d="M0.5 5.8L5 7.8l4.5-2M0.5 8L5 10l4.5-2" stroke="#444" stroke-width="0.7" fill="none"/></svg>
<svg style="left:19.4px;top:56.6px" width="9.3" height="9.3" viewBox="0 0 10 10"><path d="M0.5 2.8L5 0.8l4.5 2L5 4.8z" fill="#fff" stroke="#555" stroke-width="0.6"/><path d="M0.5 5L5 7l4.5-2M0.5 7.2L5 9.2l2-1" stroke="#555" stroke-width="0.7" fill="none"/><circle cx="7.5" cy="7.5" r="1.6" fill="none" stroke="#555" stroke-width="0.6"/></svg>
<div class="a" style="left:32.6px;top:57px;width:0.8px;height:9px;background:#c3c7ce"></div>
<div class="a" style="left:35.8px;top:56.4px;width:104.4px;height:11.8px;background:#fff"></div>
<div class="a" style="left:132.5px;top:56.4px;width:7.699999999999989px;height:11.8px;background:#eceef2"></div>
<svg style="left:134.5px;top:61px" width="4" height="2.5" viewBox="0 0 4 2.5"><path d="M0 0h4L2 2.5z" fill="#333"/></svg>
<svg style="left:0;top:0" width="1024" height="80"><rect x="142.4" y="56.0" width="0.9" height="0.9" fill="#9da2ab"/><rect x="142.4" y="57.9" width="0.9" height="0.9" fill="#9da2ab"/><rect x="142.4" y="59.8" width="0.9" height="0.9" fill="#9da2ab"/><rect x="142.4" y="61.7" width="0.9" height="0.9" fill="#9da2ab"/><rect x="142.4" y="63.6" width="0.9" height="0.9" fill="#9da2ab"/><rect x="142.4" y="65.5" width="0.9" height="0.9" fill="#9da2ab"/><rect x="142.4" y="67.4" width="0.9" height="0.9" fill="#9da2ab"/></svg>
<div class="a" style="left:146px;top:56.4px;width:79.5px;height:11.8px;background:#fff"></div>
<div class="a" style="left:217px;top:56.4px;width:8.5px;height:11.8px;background:#eceef2"></div>
<svg style="left:219px;top:61px" width="4" height="2.5" viewBox="0 0 4 2.5"><path d="M0 0h4L2 2.5z" fill="#333"/></svg>
<div class="a" style="left:150px;top:59.3px;width:6.3px;height:6.2px;background:#e0103a;border:0.5px solid #800"></div>
<div class="t" style="left:158.8px;top:59.0px;font-size:6.6px;color:#222;transform:scaleX(0.875);transform-origin:0 0">BYLAYER</div>
<svg style="left:0;top:0" width="1024" height="80"><rect x="227.5" y="56.0" width="0.9" height="0.9" fill="#9da2ab"/><rect x="227.5" y="57.9" width="0.9" height="0.9" fill="#9da2ab"/><rect x="227.5" y="59.8" width="0.9" height="0.9" fill="#9da2ab"/><rect x="227.5" y="61.7" width="0.9" height="0.9" fill="#9da2ab"/><rect x="227.5" y="63.6" width="0.9" height="0.9" fill="#9da2ab"/><rect x="227.5" y="65.5" width="0.9" height="0.9" fill="#9da2ab"/><rect x="227.5" y="67.4" width="0.9" height="0.9" fill="#9da2ab"/></svg>
<div class="a" style="left:231px;top:56.4px;width:105px;height:11.8px;background:#fff"></div>
<div class="a" style="left:328px;top:56.4px;width:8px;height:11.8px;background:#eceef2"></div>
<svg style="left:330px;top:61px" width="4" height="2.5" viewBox="0 0 4 2.5"><path d="M0 0h4L2 2.5z" fill="#333"/></svg>
<svg style="left:0;top:0" width="1024" height="80"><rect x="338.5" y="56.0" width="0.9" height="0.9" fill="#9da2ab"/><rect x="338.5" y="57.9" width="0.9" height="0.9" fill="#9da2ab"/><rect x="338.5" y="59.8" width="0.9" height="0.9" fill="#9da2ab"/><rect x="338.5" y="61.7" width="0.9" height="0.9" fill="#9da2ab"/><rect x="338.5" y="63.6" width="0.9" height="0.9" fill="#9da2ab"/><rect x="338.5" y="65.5" width="0.9" height="0.9" fill="#9da2ab"/><rect x="338.5" y="67.4" width="0.9" height="0.9" fill="#9da2ab"/></svg>
<div class="a" style="left:342px;top:56.4px;width:105px;height:11.8px;background:#fff"></div>
<div class="a" style="left:439.5px;top:56.4px;width:7.5px;height:11.8px;background:#eceef2"></div>
<svg style="left:441.5px;top:61px" width="4" height="2.5" viewBox="0 0 4 2.5"><path d="M0 0h4L2 2.5z" fill="#333"/></svg>
<div class="a" style="left:346px;top:61.8px;width:46px;height:0.8px;background:#222"></div>
<div class="t" style="left:394.8px;top:59.0px;font-size:6.6px;color:#222;transform:scaleX(0.86);transform-origin:0 0">0.00 mm</div>
<svg style="left:0;top:0" width="1024" height="80"><rect x="449.8" y="56.0" width="0.9" height="0.9" fill="#9da2ab"/><rect x="449.8" y="57.9" width="0.9" height="0.9" fill="#9da2ab"/><rect x="449.8" y="59.8" width="0.9" height="0.9" fill="#9da2ab"/><rect x="449.8" y="61.7" width="0.9" height="0.9" fill="#9da2ab"/><rect x="449.8" y="63.6" width="0.9" height="0.9" fill="#9da2ab"/><rect x="449.8" y="65.5" width="0.9" height="0.9" fill="#9da2ab"/><rect x="449.8" y="67.4" width="0.9" height="0.9" fill="#9da2ab"/></svg>
<div class="a" style="left:453.5px;top:56.4px;width:50px;height:11.8px;background:#eceef2;border:0.5px solid #c8ccd2"></div>
<div class="a" style="left:454.5px;top:57.4px;width:40px;height:9.8px;background:#cfd1d5"></div>
<div class="t" style="left:455.5px;top:59.0px;font-size:6.6px;color:#8c8c8c;transform:scaleX(0.86);transform-origin:0 0">BYCOLOR</div>
<svg style="left:497.5px;top:61px" width="4" height="2.5" viewBox="0 0 4 2.5"><path d="M0 0h4L2 2.5z" fill="#333"/></svg>
<div class="a" style="left:958.5px;top:5.2px;width:7px;height:0.6px;background:#555"></div>
<div class="a" style="left:984.8px;top:2.8px;width:5.5px;height:5.5px;border:0.6px solid #555;border-radius:1px"></div>
<div class="a" style="left:986px;top:2px;width:5px;height:5px;border-top:0.6px solid #555;border-right:0.6px solid #555"></div>
<svg style="left:1008px;top:2.6px" width="6" height="6" viewBox="0 0 6 6"><path d="M0.3 0.3L5.7 5.7M5.7 0.3L0.3 5.7" stroke="#555" stroke-width="0.6"/></svg>
<svg style="left:1005px;top:3.2px" width="4" height="4" viewBox="0 0 4 4"><circle cx="2" cy="2" r="2" fill="none"/></svg>
<div class="a" style="left:1000.5px;top:20.5px;width:3.5px;height:0.8px;background:#333"></div>
<div class="a" style="left:1009.5px;top:17.8px;width:3.8px;height:3.2px;border:0.7px solid #333;border-top-width:1.4px"></div>
<svg style="left:1018px;top:17.5px" width="4" height="4" viewBox="0 0 4 4"><path d="M0.3 0.3L3.7 3.7M3.7 0.3L0.3 3.7" stroke="#333" stroke-width="0.7"/></svg>
<svg style="left:1.2px;top:2px" width="8.1" height="8.1" viewBox="0 0 10 10"><circle cx="5" cy="5" r="4.6" fill="#8a8a8a"/><circle cx="5" cy="5" r="3" fill="#bdbdbd"/><path d="M3 7.5L7 2.5" stroke="#fff" stroke-width="1.2"/><circle cx="2.8" cy="7.6" r="1.2" fill="#f08020"/></svg>
<svg style="left:5.9px;top:14.6px" width="8" height="8" viewBox="0 0 10 10"><path d="M1 0.5h5.5l2 2v7h-7.5z" fill="#fff" stroke="#666" stroke-width="0.9"/></svg>
<div class="a" style="left:0px;top:69px;width:1024px;height:411px;background:#000"></div>
<svg class="a" style="left:0;top:0" width="1024" height="550" viewBox="0 0 1024 550">
<line x1="0.10" y1="69" x2="0.10" y2="480" stroke="#181818" stroke-width="0.75"/><line x1="13.00" y1="69" x2="13.00" y2="480" stroke="#181818" stroke-width="0.75"/><line x1="25.90" y1="69" x2="25.90" y2="480" stroke="#181818" stroke-width="0.75"/><line x1="38.80" y1="69" x2="38.80" y2="480" stroke="#181818" stroke-width="0.75"/><line x1="51.70" y1="69" x2="51.70" y2="480" stroke="#333333" stroke-width="0.75"/><line x1="64.60" y1="69" x2="64.60" y2="480" stroke="#181818" stroke-width="0.75"/><line x1="77.50" y1="69" x2="77.50" y2="480" stroke="#181818" stroke-width="0.75"/><line x1="90.40" y1="69" x2="90.40" y2="480" stroke="#181818" stroke-width="0.75"/><line x1="103.30" y1="69" x2="103.30" y2="480" stroke="#181818" stroke-width="0.75"/><line x1="116.20" y1="69" x2="116.20" y2="480" stroke="#333333" stroke-width="0.75"/><line x1="129.10" y1="69" x2="129.10" y2="480" stroke="#181818" stroke-width="0.75"/><line x1="142.00" y1="69" x2="142.00" y2="480" stroke="#181818" stroke-width="0.75"/><line x1="154.90" y1="69" x2="154.90" y2="480" stroke="#181818" stroke-width="0.75"/><line x1="167.80" y1="69" x2="167.80" y2="480" stroke="#181818" stroke-width="0.75"/><line x1="180.70" y1="69" x2="180.70" y2="480" stroke="#333333" stroke-width="0.75"/><line x1="193.60" y1="69" x2="193.60" y2="480" stroke="#181818" stroke-width="0.75"/><line x1="206.50" y1="69" x2="206.50" y2="480" stroke="#181818" stroke-width="0.75"/><line x1="219.40" y1="69" x2="219.40" y2="480" stroke="#181818" stroke-width="0.75"/><line x1="232.30" y1="69" x2="232.30" y2="480" stroke="#181818" stroke-width="0.75"/><line x1="245.20" y1="69" x2="245.20" y2="480" stroke="#333333" stroke-width="0.75"/><line x1="258.10" y1="69" x2="258.10" y2="480" stroke="#181818" stroke-width="0.75"/><line x1="271.00" y1="69" x2="271.00" y2="480" stroke="#181818" stroke-width="0.75"/><line x1="283.90" y1="69" x2="283.90" y2="480" stroke="#181818" stroke-width="0.75"/><line x1="296.80" y1="69" x2="296.80" y2="480" stroke="#181818" stroke-width="0.75"/><line x1="309.70" y1="69" x2="309.70" y2="480" stroke="#333333" stroke-width="0.75"/><line x1="322.60" y1="69" x2="322.60" y2="480" stroke="#181818" stroke-width="0.75"/><line x1="335.50" y1="69" x2="335.50" y2="480" stroke="#181818" stroke-width="0.75"/><line x1="348.40" y1="69" x2="348.40" y2="480" stroke="#181818" stroke-width="0.75"/><line x1="361.30" y1="69" x2="361.30" y2="480" stroke="#181818" stroke-width="0.75"/><line x1="374.20" y1="69" x2="374.20" y2="480" stroke="#333333" stroke-width="0.75"/><line x1="387.10" y1="69" x2="387.10" y2="480" stroke="#181818" stroke-width="0.75"/><line x1="400.00" y1="69" x2="400.00" y2="480" stroke="#181818" stroke-width="0.75"/><line x1="412.90" y1="69" x2="412.90" y2="480" stroke="#181818" stroke-width="0.75"/><line x1="425.80" y1="69" x2="425.80" y2="480" stroke="#181818" stroke-width="0.75"/><line x1="438.70" y1="69" x2="438.70" y2="480" stroke="#333333" stroke-width="0.75"/><line x1="451.60" y1="69" x2="451.60" y2="480" stroke="#181818" stroke-width="0.75"/><line x1="464.50" y1="69" x2="464.50" y2="480" stroke="#181818" stroke-width="0.75"/><line x1="477.40" y1="69" x2="477.40" y2="480" stroke="#181818" stroke-width="0.75"/><line x1="490.30" y1="69" x2="490.30" y2="480" stroke="#181818" stroke-width="0.75"/><line x1="503.20" y1="69" x2="503.20" y2="480" stroke="#333333" stroke-width="0.75"/><line x1="516.10" y1="69" x2="516.10" y2="480" stroke="#181818" stroke-width="0.75"/><line x1="529.00" y1="69" x2="529.00" y2="480" stroke="#181818" stroke-width="0.75"/><line x1="541.90" y1="69" x2="541.90" y2="480" stroke="#181818" stroke-width="0.75"/><line x1="554.80" y1="69" x2="554.80" y2="480" stroke="#181818" stroke-width="0.75"/><line x1="567.70" y1="69" x2="567.70" y2="480" stroke="#333333" stroke-width="0.75"/><line x1="580.60" y1="69" x2="580.60" y2="480" stroke="#181818" stroke-width="0.75"/><line x1="593.50" y1="69" x2="593.50" y2="480" stroke="#181818" stroke-width="0.75"/><line x1="606.40" y1="69" x2="606.40" y2="480" stroke="#181818" stroke-width="0.75"/><line x1="619.30" y1="69" x2="619.30" y2="480" stroke="#181818" stroke-width="0.75"/><line x1="632.20" y1="69" x2="632.20" y2="480" stroke="#333333" stroke-width="0.75"/><line x1="645.10" y1="69" x2="645.10" y2="480" stroke="#181818" stroke-width="0.75"/><line x1="658.00" y1="69" x2="658.00" y2="480" stroke="#181818" stroke-width="0.75"/><line x1="670.90" y1="69" x2="670.90" y2="480" stroke="#181818" stroke-width="0.75"/><line x1="683.80" y1="69" x2="683.80" y2="480" stroke="#181818" stroke-width="0.75"/><line x1="696.70" y1="69" x2="696.70" y2="480" stroke="#333333" stroke-width="0.75"/><line x1="709.60" y1="69" x2="709.60" y2="480" stroke="#181818" stroke-width="0.75"/><line x1="722.50" y1="69" x2="722.50" y2="480" stroke="#181818" stroke-width="0.75"/><line x1="735.40" y1="69" x2="735.40" y2="480" stroke="#181818" stroke-width="0.75"/><line x1="748.30" y1="69" x2="748.30" y2="480" stroke="#181818" stroke-width="0.75"/><line x1="761.20" y1="69" x2="761.20" y2="480" stroke="#333333" stroke-width="0.75"/><line x1="774.10" y1="69" x2="774.10" y2="480" stroke="#181818" stroke-width="0.75"/><line x1="787.00" y1="69" x2="787.00" y2="480" stroke="#181818" stroke-width="0.75"/><line x1="799.90" y1="69" x2="799.90" y2="480" stroke="#181818" stroke-width="0.75"/><line x1="812.80" y1="69" x2="812.80" y2="480" stroke="#181818" stroke-width="0.75"/><line x1="825.70" y1="69" x2="825.70" y2="480" stroke="#333333" stroke-width="0.75"/><line x1="838.60" y1="69" x2="838.60" y2="480" stroke="#181818" stroke-width="0.75"/><line x1="851.50" y1="69" x2="851.50" y2="480" stroke="#181818" stroke-width="0.75"/><line x1="864.40" y1="69" x2="864.40" y2="480" stroke="#181818" stroke-width="0.75"/><line x1="877.30" y1="69" x2="877.30" y2="480" stroke="#181818" stroke-width="0.75"/><line x1="890.20" y1="69" x2="890.20" y2="480" stroke="#333333" stroke-width="0.75"/><line x1="903.10" y1="69" x2="903.10" y2="480" stroke="#181818" stroke-width="0.75"/><line x1="916.00" y1="69" x2="916.00" y2="480" stroke="#181818" stroke-width="0.75"/><line x1="928.90" y1="69" x2="928.90" y2="480" stroke="#181818" stroke-width="0.75"/><line x1="941.80" y1="69" x2="941.80" y2="480" stroke="#181818" stroke-width="0.75"/><line x1="954.70" y1="69" x2="954.70" y2="480" stroke="#333333" stroke-width="0.75"/><line x1="967.60" y1="69" x2="967.60" y2="480" stroke="#181818" stroke-width="0.75"/><line x1="980.50" y1="69" x2="980.50" y2="480" stroke="#181818" stroke-width="0.75"/><line x1="993.40" y1="69" x2="993.40" y2="480" stroke="#181818" stroke-width="0.75"/><line x1="1006.30" y1="69" x2="1006.30" y2="480" stroke="#181818" stroke-width="0.75"/><line x1="1019.20" y1="69" x2="1019.20" y2="480" stroke="#333333" stroke-width="0.75"/><line x1="0" y1="78.70" x2="1019" y2="78.70" stroke="#181818" stroke-width="0.75"/><line x1="0" y1="91.60" x2="1019" y2="91.60" stroke="#181818" stroke-width="0.75"/><line x1="0" y1="104.50" x2="1019" y2="104.50" stroke="#333333" stroke-width="0.75"/><line x1="0" y1="117.40" x2="1019" y2="117.40" stroke="#181818" stroke-width="0.75"/><line x1="0" y1="130.30" x2="1019" y2="130.30" stroke="#181818" stroke-width="0.75"/><line x1="0" y1="143.20" x2="1019" y2="143.20" stroke="#181818" stroke-width="0.75"/><line x1="0" y1="156.10" x2="1019" y2="156.10" stroke="#181818" stroke-width="0.75"/><line x1="0" y1="169.00" x2="1019" y2="169.00" stroke="#333333" stroke-width="0.75"/><line x1="0" y1="181.90" x2="1019" y2="181.90" stroke="#181818" stroke-width="0.75"/><line x1="0" y1="194.80" x2="1019" y2="194.80" stroke="#181818" stroke-width="0.75"/><line x1="0" y1="207.70" x2="1019" y2="207.70" stroke="#181818" stroke-width="0.75"/><line x1="0" y1="220.60" x2="1019" y2="220.60" stroke="#181818" stroke-width="0.75"/><line x1="0" y1="233.50" x2="1019" y2="233.50" stroke="#333333" stroke-width="0.75"/><line x1="0" y1="246.40" x2="1019" y2="246.40" stroke="#181818" stroke-width="0.75"/><line x1="0" y1="259.30" x2="1019" y2="259.30" stroke="#181818" stroke-width="0.75"/><line x1="0" y1="272.20" x2="1019" y2="272.20" stroke="#181818" stroke-width="0.75"/><line x1="0" y1="285.10" x2="1019" y2="285.10" stroke="#181818" stroke-width="0.75"/><line x1="0" y1="298.00" x2="1019" y2="298.00" stroke="#333333" stroke-width="0.75"/><line x1="0" y1="310.90" x2="1019" y2="310.90" stroke="#181818" stroke-width="0.75"/><line x1="0" y1="323.80" x2="1019" y2="323.80" stroke="#181818" stroke-width="0.75"/><line x1="0" y1="336.70" x2="1019" y2="336.70" stroke="#181818" stroke-width="0.75"/><line x1="0" y1="349.60" x2="1019" y2="349.60" stroke="#181818" stroke-width="0.75"/><line x1="0" y1="362.50" x2="1019" y2="362.50" stroke="#333333" stroke-width="0.75"/><line x1="0" y1="375.40" x2="1019" y2="375.40" stroke="#181818" stroke-width="0.75"/><line x1="0" y1="388.30" x2="1019" y2="388.30" stroke="#181818" stroke-width="0.75"/><line x1="0" y1="401.20" x2="1019" y2="401.20" stroke="#181818" stroke-width="0.75"/><line x1="0" y1="414.10" x2="1019" y2="414.10" stroke="#181818" stroke-width="0.75"/><line x1="0" y1="427.00" x2="1019" y2="427.00" stroke="#333333" stroke-width="0.75"/><line x1="0" y1="439.90" x2="1019" y2="439.90" stroke="#181818" stroke-width="0.75"/><line x1="0" y1="452.80" x2="1019" y2="452.80" stroke="#181818" stroke-width="0.75"/><line x1="0" y1="465.70" x2="1019" y2="465.70" stroke="#181818" stroke-width="0.75"/><line x1="0" y1="478.60" x2="1019" y2="478.60" stroke="#181818" stroke-width="0.75"/>
<line x1="78" y1="69.5" x2="131" y2="69.5" stroke="#c04040" stroke-width="1" /><line x1="104.5" y1="69" x2="104.5" y2="96" stroke="#1a9a1a" stroke-width="1" /><line x1="373.6" y1="69" x2="373.6" y2="86" stroke="#0e600e" stroke-width="1" /><path d="M98.5 69v5.5h11.5v-5.5" stroke="#1a9a1a" stroke-width="0.9" fill="none" /><rect x="14.5" y="459" width="7" height="7" stroke="#d8d8d8" stroke-width="0.9" fill="none" /><line x1="18" y1="459" x2="18" y2="428" stroke="#1a9a1a" stroke-width="0.9" /><path d="M14.3 428.5L18 416.5L21.7 428.5z" stroke="#1a9a1a" stroke-width="0.9" fill="none" /><line x1="21.5" y1="462.5" x2="52.5" y2="462.5" stroke="#b01818" stroke-width="0.9" /><path d="M52.5 459L64 462.5L52.5 466z" stroke="#b01818" stroke-width="0.9" fill="none" /><text x="15" y="408.3" font-size="9" font-family="Liberation Sans" fill="#bdbdbd">Y</text><text x="72.6" y="466.4" font-size="9" font-family="Liberation Sans" fill="#bdbdbd">X</text><line x1="769.6" y1="69" x2="769.6" y2="480" stroke="#b8b8b8" stroke-width="1" /><line x1="728" y1="168.3" x2="1019" y2="168.3" stroke="#440c0c" stroke-width="1" /><line x1="715" y1="117.3" x2="728.3" y2="117.3" stroke="#a9a9a9" stroke-width="0.9" /><line x1="715" y1="118.8" x2="726.5" y2="118.8" stroke="#1ec99b" stroke-width="1.3" /><line x1="728.3" y1="117.3" x2="728.3" y2="331" stroke="#a9a9a9" stroke-width="0.9" /><line x1="726" y1="118" x2="726" y2="331" stroke="#1ec99b" stroke-width="1.1" /><circle cx="726" cy="154" r="1.3" fill="#1ec99b"/><circle cx="726" cy="189" r="1.3" fill="#1ec99b"/><circle cx="726" cy="224" r="1.3" fill="#1ec99b"/><circle cx="726" cy="258.7" r="1.3" fill="#1ec99b"/><circle cx="726" cy="294" r="1.3" fill="#1ec99b"/><path d="M716 163l3 2l2-3l1 4l-1 2l2 2l-3 1l-1 2l-2-3l-1-3z" stroke="#1ec99b" stroke-width="1.0" fill="#1ec99b" /><path d="M715 168l6 1M717 161l2 11" stroke="#1ec99b" stroke-width="0.8" fill="none" /><line x1="715" y1="328.5" x2="726" y2="328.5" stroke="#9a6636" stroke-width="0.9" /><line x1="726" y1="331" x2="728.3" y2="331" stroke="#a9a9a9" stroke-width="0.9" /><line x1="715.8" y1="330" x2="715.8" y2="428.2" stroke="#9a6636" stroke-width="0.9" /><rect x="992.7" y="72.2" width="29" height="7.6" stroke="none" stroke-width="0" fill="#3a3a3a" /><line x1="995" y1="77.8" x2="998" y2="77.8" stroke="#111" stroke-width="1" /><rect x="1004.5" y="74.6" width="3.2" height="3" stroke="#111" stroke-width="0.7" fill="none" /><line x1="1005.5" y1="73.8" x2="1008.5" y2="73.8" stroke="#111" stroke-width="0.7" /><path d="M1016 74l3 3.5M1019 74l-3 3.5" stroke="#111" stroke-width="0.8" fill="none" /><line x1="374.4" y1="389" x2="374.4" y2="480" stroke="#9a6636" stroke-width="0.9" /><line x1="382.3" y1="389" x2="382.3" y2="477.6" stroke="#a9a9a9" stroke-width="0.9" /><path d="M320.5 389V422.4H400V389" stroke="#a9a9a9" stroke-width="0.9" fill="none" /><line x1="424.3" y1="389" x2="424.3" y2="452" stroke="#9a6636" stroke-width="0.9" /><rect x="382.3" y="460.5" width="42" height="17.1" stroke="#e6e6e6" stroke-width="1.1" fill="none" /><line x1="382.3" y1="469.3" x2="424.3" y2="469.3" stroke="#e6e6e6" stroke-width="1.1" /><line x1="396.4" y1="460.5" x2="396.4" y2="477.6" stroke="#e6e6e6" stroke-width="1.1" /><line x1="410.5" y1="460.5" x2="410.5" y2="477.6" stroke="#e6e6e6" stroke-width="1.1" /><line x1="410.5" y1="460.5" x2="423.8" y2="454.7" stroke="#a9a9a9" stroke-width="0.9" /><line x1="382.3" y1="477.6" x2="486" y2="477.6" stroke="#a9a9a9" stroke-width="0.9" /><path d="M405 412.5C420 411 440 413.5 463 412M404 414.5C425 413.5 445 415 462 414M405 420.5C420 419.5 445 421.5 463 420M404 447.5C420 446.5 445 448.5 463 447M402 450.5C420 449.5 445 451.5 466 450M399.5 453.5C405 450 410 452 412 449" stroke="#1ec99b" stroke-width="1.0" fill="none" /><path d="M405 412L407 420L406 430L408 440L405 447L402 451M408 413L409 425L410 436L408 447" stroke="#1ec99b" stroke-width="1.1" fill="none" /><path d="M462 412L465 422L463 430L464 440L462 448L465 453M459 413L461 428L460 440L458 447" stroke="#1ec99b" stroke-width="1.1" fill="none" /><path d="M404 411.5a2 2 0 1 1 4 0M461 411.5a2 2 0 1 1 4 0M466 418a2 3 0 1 1 0 -4" stroke="#1ec99b" stroke-width="1.0" fill="none" /><line x1="433.5" y1="389" x2="433.5" y2="447" stroke="#1ec99b" stroke-width="0.8" /><line x1="407.8" y1="391" x2="407.8" y2="411" stroke="#1ec99b" stroke-width="0.8" /><line x1="459.8" y1="391" x2="459.8" y2="411" stroke="#1ec99b" stroke-width="0.8" /><circle cx="457" cy="431.5" r="7.3" stroke="#1ec99b" stroke-width="0.9" fill="none"/><circle cx="407" cy="408" r="1.1" fill="#1ec99b"/><line x1="381" y1="390.6" x2="486" y2="390.6" stroke="#a9a9a9" stroke-width="0.9" /><line x1="396.5" y1="392.5" x2="471.2" y2="392.5" stroke="#1ec99b" stroke-width="1" /><rect x="396.5" y="392" width="10.5" height="9" stroke="#1ec99b" stroke-width="0.8" fill="none" /><line x1="399.5" y1="392" x2="399.5" y2="401" stroke="#1ec99b" stroke-width="0.7" /><line x1="402.5" y1="392" x2="402.5" y2="401" stroke="#1ec99b" stroke-width="0.7" /><line x1="404.5" y1="392" x2="404.5" y2="401" stroke="#1ec99b" stroke-width="0.6" /><rect x="460.7" y="392" width="10.5" height="9" stroke="#1ec99b" stroke-width="0.8" fill="none" /><line x1="463.5" y1="392" x2="463.5" y2="401" stroke="#1ec99b" stroke-width="0.7" /><line x1="466.5" y1="392" x2="466.5" y2="401" stroke="#1ec99b" stroke-width="0.7" /><line x1="468.5" y1="392" x2="468.5" y2="401" stroke="#1ec99b" stroke-width="0.6" /><path d="M418 395C419 402 426 404 432 400C438 397 445 403 450 398L448 392M420 393l4 6M438 393l3 6M426 396l4-3M444 394l-3 5" stroke="#1ec99b" stroke-width="1.1" fill="none" /><rect x="425.5" y="465.2" width="60.5" height="12.4" stroke="#1ec99b" stroke-width="0.9" fill="none" /><line x1="436" y1="465.2" x2="436" y2="477.6" stroke="#1ec99b" stroke-width="0.8" /><line x1="445.6" y1="465.2" x2="445.6" y2="477.6" stroke="#1ec99b" stroke-width="0.8" /><line x1="456" y1="465.2" x2="456" y2="477.6" stroke="#1ec99b" stroke-width="0.8" /><line x1="465" y1="465.2" x2="465" y2="477.6" stroke="#1ec99b" stroke-width="0.8" /><circle cx="428.5" cy="472" r="3.5" stroke="#1ec99b" stroke-width="0.8" fill="none"/><path d="M411 463l4 2l-1 5l4 2l-2 4l5-1M415 462v14M419 466h3" stroke="#1ec99b" stroke-width="1.6" fill="none" /><path d="M466 472l6-2l5 2l5-1l3 4M468 468v8M475 470h6M470 476h12" stroke="#1ec99b" stroke-width="1.0" fill="none" /><line x1="486.1" y1="389" x2="486.1" y2="478" stroke="#a9a9a9" stroke-width="1" /><line x1="488.2" y1="389" x2="488.2" y2="478" stroke="#a9a9a9" stroke-width="0.8" /><line x1="490.2" y1="389" x2="490.2" y2="420" stroke="#a9a9a9" stroke-width="0.8" /><line x1="488" y1="395.6" x2="488" y2="420.3" stroke="#86e81e" stroke-width="1.2" /><line x1="490.5" y1="419.4" x2="502" y2="400" stroke="#86e81e" stroke-width="1.2" /><circle cx="502" cy="400" r="1.6" fill="#86e81e"/><path d="M509.7 416.4L529 422.9M509.5 415l2.5 3" stroke="#86e81e" stroke-width="1.4" fill="none" /><line x1="490" y1="422.3" x2="690" y2="422.3" stroke="#a9a9a9" stroke-width="1" /><line x1="490" y1="424.5" x2="707" y2="424.5" stroke="#a9a9a9" stroke-width="0.8" /><line x1="503.8" y1="427.3" x2="503.8" y2="478" stroke="#a9a9a9" stroke-width="0.8" /><rect x="489.7" y="427.3" width="13.2" height="49.4" stroke="#1ec99b" stroke-width="1" fill="none" /><line x1="489.7" y1="436" x2="502.9" y2="436" stroke="#1ec99b" stroke-width="0.8" /><line x1="489.7" y1="446" x2="502.9" y2="446" stroke="#1ec99b" stroke-width="0.8" /><line x1="489.7" y1="456" x2="502.9" y2="456" stroke="#1ec99b" stroke-width="0.8" /><line x1="489.7" y1="466" x2="502.9" y2="466" stroke="#1ec99b" stroke-width="0.8" /><path d="M492 430h9M491 432h10M492 438v6h4M498 440v4M492 448h8M492 452v6M498 450v5M493 462h7M492 468h8M494 471v4M499 471v4" stroke="#1ec99b" stroke-width="1.1" fill="none" /><rect x="507" y="424" width="22" height="3.3" stroke="#86e81e" stroke-width="1" fill="none" /><path d="M571.4 422.5h28M573 422l1-3l2 2l1-3l2 3l2-2l2 3l1-3l3 1l2-2l2 3l2-1l2 2" stroke="#1ec99b" stroke-width="1.0" fill="none" /><rect x="565.3" y="389" width="79.4" height="18.6" stroke="#168a6a" stroke-width="0.8" fill="none" /><rect x="503.5" y="425.6" width="79.4" height="52.9" stroke="#a9a9a9" stroke-width="0.9" fill="none" /><rect x="508" y="431.7" width="69.6" height="42.3" stroke="#a9a9a9" stroke-width="0.9" fill="none" /><rect x="512.3" y="437" width="60.9" height="31.8" stroke="#a9a9a9" stroke-width="1.6" fill="none" /><rect x="514.3" y="439" width="56.9" height="27.8" stroke="#6a6a6a" stroke-width="0.7" fill="none" /><path d="M540 440a4 4 0 1 0 8 0a4 4 0 1 0 -8 0M541 428h6v5h-6z" stroke="#1ec99b" stroke-width="1.1" fill="none" /><line x1="545" y1="477.6" x2="562.6" y2="428.2" stroke="#e6e6e6" stroke-width="1" /><line x1="548.5" y1="477.6" x2="566" y2="428.2" stroke="#e6e6e6" stroke-width="1" /><path d="M577.6 431v45M566 433h10M555 473h20" stroke="#1ec99b" stroke-width="0.9" fill="none" /><line x1="582" y1="424.5" x2="582" y2="478.5" stroke="#a9a9a9" stroke-width="0.9" /><line x1="590" y1="424.5" x2="590" y2="478.5" stroke="#a9a9a9" stroke-width="0.9" /><line x1="583" y1="424.7" x2="590" y2="431.2" stroke="#a9a9a9" stroke-width="0.9" /><line x1="582" y1="431.2" x2="590" y2="431.2" stroke="#9a6636" stroke-width="0.9" /><line x1="432" y1="479" x2="472" y2="479" stroke="#1ec99b" stroke-width="1.1" /><line x1="451" y1="478.5" x2="452" y2="478.5" stroke="#86e81e" stroke-width="2" /><line x1="514" y1="478.6" x2="529" y2="478.6" stroke="#86e81e" stroke-width="1.1" /><path d="M504 470l4 4l3 3h6M505 476l3-3" stroke="#1ec99b" stroke-width="1.0" fill="none" /><rect x="530" y="473.5" width="16" height="4" stroke="#1ec99b" stroke-width="0.8" fill="none" /><rect x="590" y="427.6" width="117.3" height="3.2" stroke="#86e81e" stroke-width="0" fill="#3f8a0c" /><rect x="613" y="428.2" width="60.8" height="1.8" stroke="none" stroke-width="0" fill="#9af028" /><line x1="590" y1="431.3" x2="707.3" y2="431.3" stroke="#86e81e" stroke-width="0.6" /><path d="M683 410l6 2l-1 6l-6-1z M681.7 408l2 3M690 418l-2-2" stroke="#1ec99b" stroke-width="1" fill="none" /><path d="M696 401l7 6l2-4l1 8l6 1l-6 2l-1 6l-2-5l-4 1l3-4z" stroke="#1ec99b" stroke-width="1" fill="none" /><rect x="694" y="389" width="13.3" height="8.3" stroke="#a9a9a9" stroke-width="0.8" fill="none" /><rect x="696" y="390" width="9.5" height="5" stroke="#1ec99b" stroke-width="0.8" fill="none" /><line x1="705.6" y1="389" x2="705.6" y2="422" stroke="#a9a9a9" stroke-width="0.8" /><line x1="707.3" y1="389" x2="707.3" y2="422" stroke="#a9a9a9" stroke-width="0.8" /><rect x="708.2" y="422" width="7.1" height="10" stroke="#a9a9a9" stroke-width="0.8" fill="none" /><line x1="715.3" y1="428.2" x2="726.7" y2="428.2" stroke="#9a6636" stroke-width="0.9" /><line x1="728.5" y1="428" x2="728.5" y2="480" stroke="#a9a9a9" stroke-width="0.9" /><line x1="726.2" y1="432" x2="726.2" y2="480" stroke="#1ec99b" stroke-width="1.6" /><path d="M708 440l5-4l4 3l4-2l3 5l3 2l-2 5l2 4l-4 3l-3 5l-4-3l-5 3l-2-5l-4-1l2-5l-3-4z" stroke="#1ec99b" stroke-width="1.0" fill="#0b5a45" /><path d="M712 442l8 12M718 438l-4 18M708 450h14M710 446l10 3M714 452l6-8M716 440v16M709 454l9-9" stroke="#1ec99b" stroke-width="0.9" fill="none" /><path d="M674 454L720 476.5M668.5 463.5L711 481M674 454Q667 455 668.5 463.5" stroke="#1ec99b" stroke-width="1.2" fill="none" /><line x1="676.0" y1="455.2" x2="671.4" y2="464.5" stroke="#1ec99b" stroke-width="1" /><line x1="680.7" y1="457.5" x2="676.1" y2="466.45" stroke="#1ec99b" stroke-width="1" /><line x1="685.4" y1="459.8" x2="680.8" y2="468.4" stroke="#1ec99b" stroke-width="1" /><line x1="690.1" y1="462.09999999999997" x2="685.5" y2="470.35" stroke="#1ec99b" stroke-width="1" /><line x1="694.8" y1="464.4" x2="690.1999999999999" y2="472.3" stroke="#1ec99b" stroke-width="1" /><line x1="699.5" y1="466.7" x2="694.9" y2="474.25" stroke="#1ec99b" stroke-width="1" /><line x1="704.2" y1="469.0" x2="699.6" y2="476.2" stroke="#1ec99b" stroke-width="1" /><line x1="708.9" y1="471.3" x2="704.3" y2="478.15" stroke="#1ec99b" stroke-width="1" /><line x1="713.6" y1="473.59999999999997" x2="709.0" y2="480.1" stroke="#1ec99b" stroke-width="1" />
</svg>
<div class="a" style="left:308px;top:86px;width:408px;height:304.5px;background:#f9f9f9;border:1px solid #a9a9a9;border-radius:4px;box-shadow:0 1px 4px rgba(0,0,0,.45)"></div>
<div class="a" style="left:309px;top:87px;width:406px;height:15.5px;background:#f6eef3;border-radius:3px 3px 0 0"></div>
<svg style="left:312.5px;top:89.3px" width="9" height="8.5" viewBox="0 0 9 8.5"><rect x="0" y="0" width="9" height="8.5" fill="#f0b838"/><path d="M0 0h2.5v8.5h-2.5z" fill="#1d3c6c"/><path d="M2.5 1L6.5 3.2L4.5 7.5L2.5 6z" fill="#2a8ae0"/><path d="M6 0.8l2.2 1.2-1 2.5z" fill="#1d5ab0"/><path d="M0 5.5l4 3h-4z" fill="#111"/></svg>
<div class="t" style="left:324.5px;top:91.50px;font-size:6.70px;color:#000;transform:scaleX(0.92);transform-origin:0 0;-webkit-text-stroke:0.1px currentColor;">Wstawianie szafek [1721]</div>
<div class="a" style="left:651.7px;top:93.3px;width:5.5px;height:0.6px;background:#b0b0b0"></div>
<div class="a" style="left:676.4px;top:91px;width:5.3px;height:4.9px;border:0.6px solid #333;border-radius:0.8px"></div>
<svg style="left:700.4px;top:90.5px" width="6" height="6" viewBox="0 0 6 6"><path d="M0 0L6 6M6 0L0 6" stroke="#222" stroke-width="0.7"/></svg>
<div class="a" style="left:309px;top:102.5px;width:406px;height:10px;background:#efefef"></div>
<div class="a" style="left:309px;top:102.5px;width:122px;height:10px;background:#fafafa"></div>
<div class="a" style="left:431px;top:103.2px;width:52.4px;height:9.3px;background:#ededed;border:0.6px solid #e2e2e2;border-bottom:none"></div>
<div class="t" style="left:312.7px;top:104.90px;font-size:6.57px;color:#000;transform:scaleX(0.92);transform-origin:0 0;-webkit-text-stroke:0.1px currentColor;">Uniwersalna baza mebli kuchennych 2023</div>
<div class="t" style="left:433.6px;top:105.70px;font-size:6.48px;color:#000;transform:scaleX(0.92);transform-origin:0 0;-webkit-text-stroke:0.1px currentColor;">Baza użytkownika</div>
<div class="a" style="left:622px;top:112.5px;width:1px;height:225px;background:#e3e3e3"></div>
<div class="a" style="left:594.5px;top:146px;width:27px;height:1px;background:#dcdcdc"></div>
<div class="a" style="left:594.5px;top:147.6px;width:16.5px;height:53px;background:#f2994e"></div>
<div class="a" style="left:594.5px;top:200.6px;width:16.5px;height:53.4px;background:#efefef"></div>
<div class="a" style="left:594.5px;top:254px;width:16.5px;height:52.8px;background:#c9c9c9"></div>
<div class="a" style="left:594.5px;top:306.8px;width:16.5px;height:30.7px;background:#efefef"></div>
<div class="a" style="left:611px;top:147px;width:10.5px;height:190.5px;background:#f3f3f3"></div>
<div class="a" style="left:615.3px;top:156px;width:0.8px;height:9.5px;background:#777"></div>
<svg style="left:599px;top:118px" width="9" height="9" viewBox="0 0 9 9"><circle cx="5.5" cy="3.5" r="2.7" fill="#ddd" stroke="#222" stroke-width="1"/><path d="M3.6 5.4L1 8" stroke="#222" stroke-width="1.6" stroke-linecap="round"/></svg>
<div class="a" style="left:623px;top:118.4px;width:90.5px;height:39.5px;border:1px solid #e2e2e2;border-radius:2px"></div>
<div class="t" style="left:627.3px;top:115.50px;font-size:6.59px;color:#000;transform:scaleX(0.92);transform-origin:0 0;-webkit-text-stroke:0.1px currentColor;background:#f9f9f9;padding:0 1px">Zestaw</div>
<div class="a" style="left:626.6px;top:128px;width:67.4px;height:10.3px;background:#fff;border:1px solid #cfcfcf;border-bottom-color:#b4b4b4;border-radius:2px"></div>
<div class="t" style="left:629.1px;top:130.80px;font-size:6.59px;color:#000;transform:scaleX(0.92);transform-origin:0 0;-webkit-text-stroke:0.1px currentColor;">SIMPLE</div>
<svg style="left:686.5px;top:131.65px" width="4" height="2.5" viewBox="0 0 4 2.5"><path d="M0.2 0.3L2 2.1L3.8 0.3" fill="none" stroke="#555" stroke-width="0.6"/></svg>
<svg style="left:697.6px;top:126.5px" width="12" height="12" viewBox="0 0 12 12"><path d="M1.5 0.5h6.5l3 3v8h-9.5z" fill="#e8f1fb" stroke="#7aa9d8" stroke-width="0.7"/><circle cx="6.5" cy="5.5" r="2.6" fill="#cfe6fb" stroke="#3f7fc4" stroke-width="0.8"/><path d="M4.5 7.5L1.8 10.5" stroke="#e29a3a" stroke-width="1.4" stroke-linecap="round"/></svg>
<div class="a" style="left:626.6px;top:142.5px;width:83.4px;height:10.7px;background:#fdfdfd;border:1px solid #d8d8d8;border-bottom-color:#c4c4c4;border-radius:2.5px"></div>
<div class="t" style="left:626.6px;top:142.5px;width:83.4px;height:10.7px;font-size:6.1px;color:#000;display:flex;align-items:center;justify-content:center"><span style="display:inline-block;font-size:6.59px;transform:scaleX(0.92);-webkit-text-stroke:0.1px currentColor">Określ kolorystykę</span></div>
<div class="a" style="left:623px;top:162.6px;width:90.5px;height:76px;border:1px solid #e2e2e2;border-radius:2px"></div>
<div class="t" style="left:627.3px;top:159.70px;font-size:6.59px;color:#000;transform:scaleX(0.92);transform-origin:0 0;-webkit-text-stroke:0.1px currentColor;background:#f9f9f9;padding:0 1px">Uchwyty</div>
<div class="a" style="left:628.5px;top:168.6px;width:79px;height:10.6px;background:#f9f9f9;border:1px solid #e6e6e6;border-bottom-color:#e0e0e0;border-radius:2px"></div>
<div class="t" style="left:631.0px;top:171.55px;font-size:6.59px;color:#a0a0a0;transform:scaleX(0.92);transform-origin:0 0;-webkit-text-stroke:0.1px currentColor;">Bez uchwytów</div>
<svg style="left:700.0px;top:172.4px" width="4" height="2.5" viewBox="0 0 4 2.5"><path d="M0.2 0.3L2 2.1L3.8 0.3" fill="none" stroke="#aaa" stroke-width="0.6"/></svg>
<div class="a" style="left:629px;top:184px;width:33.8px;height:39.4px;background:#000"></div>
<div class="t" style="left:665px;top:184.90px;font-size:6.59px;color:#000;transform:scaleX(0.92);transform-origin:0 0;-webkit-text-stroke:0.1px currentColor;">Zawiasy</div>
<div class="a" style="left:665px;top:195.5px;width:6.6px;height:6.6px;border:0.8px solid #bdbdbd;border-radius:50%;background:#fbfbfb"></div>
<div class="t" style="left:674px;top:196.10px;font-size:6.59px;color:#8a8a8a;transform:scaleX(0.92);transform-origin:0 0;-webkit-text-stroke:0.1px currentColor;">Lewe</div>
<div class="a" style="left:665px;top:205.89999999999998px;width:6.6px;height:6.6px;border:0.8px solid #bdbdbd;border-radius:50%;background:#fbfbfb"></div>
<div class="t" style="left:674px;top:206.50px;font-size:6.59px;color:#8a8a8a;transform:scaleX(0.92);transform-origin:0 0;-webkit-text-stroke:0.1px currentColor;">Prawe</div>
<div class="a" style="left:623px;top:240.5px;width:90px;height:1px;background:#e6e6e6"></div>
<div class="a" style="left:627.4px;top:248.8px;width:39.4px;height:10.2px;background:#fdfdfd;border:1px solid #d8d8d8;border-bottom-color:#c4c4c4;border-radius:2.5px"></div>
<div class="t" style="left:627.4px;top:248.8px;width:39.4px;height:10.2px;font-size:6.1px;color:#000;display:flex;align-items:center;justify-content:center"><span style="display:inline-block;font-size:6.59px;transform:scaleX(0.92);-webkit-text-stroke:0.1px currentColor">Fronty</span></div>
<div class="a" style="left:671.6px;top:248.8px;width:38.4px;height:10.2px;background:#fdfdfd;border:1px solid #d8d8d8;border-bottom-color:#c4c4c4;border-radius:2.5px"></div>
<div class="t" style="left:671.6px;top:248.8px;width:38.4px;height:10.2px;font-size:6.1px;color:#000;display:flex;align-items:center;justify-content:center"><span style="display:inline-block;font-size:6.59px;transform:scaleX(0.92);-webkit-text-stroke:0.1px currentColor">Cokoły</span></div>
<div class="a" style="left:626px;top:262.5px;width:84.6px;height:10px;background:#fff;border:1px solid #cfcfcf;border-bottom-color:#b4b4b4;border-radius:2px"></div>
<div class="t" style="left:628.5px;top:265.15px;font-size:6.59px;color:#000;transform:scaleX(0.92);transform-origin:0 0;-webkit-text-stroke:0.1px currentColor;">Cokół-100 mm</div>
<svg style="left:703.1px;top:266.0px" width="4" height="2.5" viewBox="0 0 4 2.5"><path d="M0.2 0.3L2 2.1L3.8 0.3" fill="none" stroke="#555" stroke-width="0.6"/></svg>
<div class="a" style="left:623px;top:280.8px;width:90.5px;height:41.5px;border:1px solid #e2e2e2;border-radius:2px"></div>
<div class="t" style="left:627.3px;top:277.90px;font-size:6.59px;color:#000;transform:scaleX(0.92);transform-origin:0 0;-webkit-text-stroke:0.1px currentColor;background:#f9f9f9;padding:0 1px">Odsunięcia szafek</div>
<div class="a" style="left:670.4px;top:289.7px;width:38.3px;height:10.7px;background:#fff;border:1px solid #cfcfcf;border-bottom-color:#b4b4b4;border-radius:2px"></div>
<div class="t" style="left:672.9px;top:292.70px;font-size:6.59px;color:#000;transform:scaleX(0.92);transform-origin:0 0;-webkit-text-stroke:0.1px currentColor;">0</div>
<svg style="left:701.1999999999999px;top:293.55px" width="4" height="2.5" viewBox="0 0 4 2.5"><path d="M0.2 0.3L2 2.1L3.8 0.3" fill="none" stroke="#555" stroke-width="0.6"/></svg>
<div class="a" style="left:670.4px;top:306.8px;width:38.3px;height:10.7px;background:#fff;border:1px solid #cfcfcf;border-bottom-color:#b4b4b4;border-radius:2px"></div>
<div class="t" style="left:672.9px;top:309.80px;font-size:6.59px;color:#000;transform:scaleX(0.92);transform-origin:0 0;-webkit-text-stroke:0.1px currentColor;">0</div>
<svg style="left:701.1999999999999px;top:310.65000000000003px" width="4" height="2.5" viewBox="0 0 4 2.5"><path d="M0.2 0.3L2 2.1L3.8 0.3" fill="none" stroke="#555" stroke-width="0.6"/></svg>
<svg style="left:629px;top:290.4px" width="20" height="10" viewBox="0 0 20 10"><rect x="0.5" y="0.5" width="7" height="9" fill="#e07b3c" stroke="#a8501c" stroke-width="0.7"/><path d="M7.5 6h8" stroke="#333" stroke-width="0.8"/><rect x="15" y="1" width="1.5" height="8" fill="#666"/><rect x="17.5" y="1" width="1.5" height="8" fill="#666"/></svg>
<svg style="left:629px;top:307.5px" width="20" height="10" viewBox="0 0 20 10"><rect x="0.5" y="0.5" width="7" height="9" fill="#e07b3c" stroke="#a8501c" stroke-width="0.7"/><rect x="12" y="0.5" width="7" height="9" fill="#e07b3c" stroke="#a8501c" stroke-width="0.7"/><path d="M7.5 6h4.5" stroke="#333" stroke-width="0.8"/></svg>
<div class="a" style="left:311.5px;top:341.5px;width:401.2px;height:18.5px;border:1px solid #e4e4e4;border-radius:2px"></div>
<div class="t" style="left:317px;top:349.90px;font-size:7.56px;color:#555;transform:scaleX(0.92);transform-origin:0 0;-webkit-text-stroke:0.1px currentColor;">x</div>
<div class="a" style="left:323.3px;top:347.2px;width:21.9px;height:9.8px;background:#fff;border:1px solid #e2e2e2;border-bottom-color:#9a9a9a;border-radius:2px"></div>
<div class="t" style="left:325.3px;top:348.90px;font-size:6.59px;color:#000;transform:scaleX(0.92);transform-origin:0 0;-webkit-text-stroke:0.1px currentColor;">100</div>
<div class="t" style="left:349.7px;top:349.90px;font-size:7.56px;color:#555;transform:scaleX(0.92);transform-origin:0 0;-webkit-text-stroke:0.1px currentColor;">y</div>
<div class="a" style="left:355.4px;top:347.2px;width:22.2px;height:9.8px;background:#fff;border:1px solid #e2e2e2;border-bottom-color:#9a9a9a;border-radius:2px"></div>
<div class="t" style="left:357.4px;top:348.90px;font-size:6.59px;color:#000;transform:scaleX(0.92);transform-origin:0 0;-webkit-text-stroke:0.1px currentColor;">580</div>
<div class="t" style="left:381.5px;top:349.90px;font-size:7.56px;color:#555;transform:scaleX(0.92);transform-origin:0 0;-webkit-text-stroke:0.1px currentColor;">z</div>
<div class="a" style="left:387.5px;top:347.2px;width:22.2px;height:9.8px;background:#fff;border:1px solid #e2e2e2;border-bottom-color:#9a9a9a;border-radius:2px"></div>
<div class="t" style="left:389.5px;top:348.90px;font-size:6.59px;color:#000;transform:scaleX(0.92);transform-origin:0 0;-webkit-text-stroke:0.1px currentColor;">720</div>
<div class="a" style="left:415px;top:346px;width:0.8px;height:11px;background:#cfcfcf"></div>
<div class="a" style="left:421.2px;top:346.2px;width:29.2px;height:11.4px;background:#fff;border:1px solid #cfcfcf;border-bottom-color:#b4b4b4;border-radius:2px"></div>
<div class="t" style="left:423.7px;top:349.55px;font-size:6.59px;color:#000;transform:scaleX(0.92);transform-origin:0 0;-webkit-text-stroke:0.1px currentColor;">100</div>
<svg style="left:442.9px;top:350.4px" width="4" height="2.5" viewBox="0 0 4 2.5"><path d="M0.2 0.3L2 2.1L3.8 0.3" fill="none" stroke="#555" stroke-width="0.6"/></svg>
<div class="t" style="left:453.8px;top:350.70px;font-size:6.59px;color:#000;transform:scaleX(0.92);transform-origin:0 0;-webkit-text-stroke:0.1px currentColor;">Poziom [mm]</div>
<div class="a" style="left:499.3px;top:346px;width:0.8px;height:11px;background:#cfcfcf"></div>
<div class="a" style="left:311.5px;top:365px;width:81px;height:21.7px;border:1px solid #e2e2e2;border-radius:2px"></div>
<div class="t" style="left:314.5px;top:362.10px;font-size:6.59px;color:#000;transform:scaleX(0.92);transform-origin:0 0;-webkit-text-stroke:0.1px currentColor;background:#f9f9f9;padding:0 1px">Dostaw</div>
<div class="a" style="left:392.4px;top:364.5px;width:112.2px;height:22.5px;border:1px solid #e2e2e2;border-radius:2px"></div>
<div class="t" style="left:396.5px;top:361.60px;font-size:6.59px;color:#000;transform:scaleX(0.92);transform-origin:0 0;-webkit-text-stroke:0.1px currentColor;background:#f9f9f9;padding:0 1px">Wstaw</div>
<div class="a" style="left:315.3px;top:370px;width:21.7px;height:11.6px;background:#f2f2f2;border:1px solid #cfcfcf;border-bottom-color:#777;border-right-color:#888"></div>
<svg style="left:319px;top:371.5px" width="15" height="9" viewBox="0 0 15 9"><rect x="0.5" y="3.5" width="4" height="4" fill="#f0a81e" stroke="#7a5a10" stroke-width="0.5"/><rect x="4.5" y="3.5" width="4" height="4" fill="#f0a81e" stroke="#7a5a10" stroke-width="0.5"/><rect x="9" y="2.5" width="4" height="5" fill="#fff" stroke="#aaa" stroke-width="0.5"/><rect x="12" y="0.3" width="2" height="2" fill="#f7b53b"/></svg>
<div class="a" style="left:341.4px;top:369.5px;width:19.1px;height:12.1px;background:#fdfdfd;border:1px solid #d8d8d8;border-bottom-color:#c4c4c4;border-radius:2.5px"></div>
<div class="a" style="left:366.2px;top:369.5px;width:19.2px;height:12.1px;background:#fdfdfd;border:1px solid #d8d8d8;border-bottom-color:#c4c4c4;border-radius:2.5px"></div>
<svg style="left:347px;top:372px" width="8" height="7" viewBox="0 0 8 7"><path d="M0.6 3.5L3.8 0.6V2.2H7.4V4.8H3.8V6.4z" fill="#fff" stroke="#111" stroke-width="0.8" stroke-linejoin="round"/></svg>
<svg style="left:372px;top:372px" width="8" height="7" viewBox="0 0 8 7"><path d="M7.4 3.5L4.2 0.6V2.2H0.6V4.8H4.2V6.4z" fill="#fff" stroke="#111" stroke-width="0.8" stroke-linejoin="round"/></svg>
<div class="a" style="left:396.8px;top:370px;width:48.5px;height:11.3px;background:#fdfdfd;border:1px solid #d8d8d8;border-bottom-color:#c4c4c4;border-radius:2.5px"></div>
<div class="t" style="left:396.8px;top:370px;width:48.5px;height:11.3px;font-size:6.1px;color:#000;display:flex;align-items:center;justify-content:center"><span style="display:inline-block;font-size:6.59px;transform:scaleX(0.92);-webkit-text-stroke:0.1px currentColor">Wskaż punkt</span></div>
<div class="a" style="left:450.6px;top:370px;width:48.9px;height:11.3px;background:#fdfdfd;border:1px solid #d8d8d8;border-bottom-color:#c4c4c4;border-radius:2.5px"></div>
<div class="t" style="left:450.6px;top:370px;width:48.9px;height:11.3px;font-size:6.1px;color:#000;display:flex;align-items:center;justify-content:center"><span style="display:inline-block;font-size:6.59px;transform:scaleX(0.92);-webkit-text-stroke:0.1px currentColor">Do narożnika</span></div>
<div class="a" style="left:671.3px;top:369.5px;width:38.1px;height:11.9px;background:#fdfdfd;border:1px solid #d8d8d8;border-bottom-color:#c4c4c4;border-radius:2.5px"></div>
<div class="t" style="left:671.3px;top:369.5px;width:38.1px;height:11.9px;font-size:6.1px;color:#000;display:flex;align-items:center;justify-content:center"><span style="display:inline-block;font-size:6.59px;transform:scaleX(0.92);-webkit-text-stroke:0.1px currentColor">Anuluj</span></div>
<div class="a" style="left:309.5px;top:146.5px;width:2.9px;height:191px;background:#ececec"></div>
<div class="a" style="left:310px;top:148.2px;width:2.2px;height:52px;background:#f3b483"></div>
<div class="a" style="left:312.9px;top:117px;width:280.8px;height:10.3px;background:#cce4f7;border:0.8px solid #5b9bd5;border-bottom:1.3px solid #2e5f94"></div>
<div class="t" style="left:315px;top:120.20px;font-size:6.59px;color:#000;transform:scaleX(0.92);transform-origin:0 0;-webkit-text-stroke:0.1px currentColor;">*</div>
<svg style="left:585.5px;top:121.3px" width="4" height="2.5" viewBox="0 0 4 2.5"><path d="M0.2 0.3L2 2.1L3.8 0.3" fill="none" stroke="#666" stroke-width="0.6"/></svg>
<div class="a" style="left:312.5px;top:127.3px;width:281.8px;height:216.3px;background:#fff;border:1px solid #9a9a9a;border-top:none;box-shadow:1px 1px 1.5px rgba(0,0,0,.35)"></div>
<div class="a" style="left:313.3px;top:127.3px;width:280.2px;height:7.7px;background:#0078d7"></div>
<div class="t" style="left:314.5px;top:130.1px;font-size:6.6px;color:#fff;transform:scaleX(0.92);transform-origin:0 0;-webkit-text-stroke:0.1px currentColor">*</div>
<div class="t" style="left:314.5px;top:137.03px;font-size:6.6px;color:#000;transform:scaleX(0.92);transform-origin:0 0;-webkit-text-stroke:0.1px currentColor">Elementy maskujące</div>
<div class="t" style="left:314.5px;top:143.95999999999998px;font-size:6.6px;color:#000;transform:scaleX(0.92);transform-origin:0 0;-webkit-text-stroke:0.1px currentColor">Fronty maskujące</div>
<div class="t" style="left:314.5px;top:150.89px;font-size:6.6px;color:#000;transform:scaleX(0.92);transform-origin:0 0;-webkit-text-stroke:0.1px currentColor">Pilastry</div>
<div class="t" style="left:314.5px;top:157.82px;font-size:6.6px;color:#000;transform:scaleX(0.92);transform-origin:0 0;-webkit-text-stroke:0.1px currentColor">Półki</div>
<div class="t" style="left:314.5px;top:164.75px;font-size:6.6px;color:#000;transform:scaleX(0.92);transform-origin:0 0;-webkit-text-stroke:0.1px currentColor">Szafki dolne do jadalni</div>
<div class="t" style="left:314.5px;top:171.68px;font-size:6.6px;color:#000;transform:scaleX(0.92);transform-origin:0 0;-webkit-text-stroke:0.1px currentColor">Szafki dolne do zabudowy AGD</div>
<div class="t" style="left:314.5px;top:178.60999999999999px;font-size:6.6px;color:#000;transform:scaleX(0.92);transform-origin:0 0;-webkit-text-stroke:0.1px currentColor">Szafki dolne h - 720</div>
<div class="t" style="left:314.5px;top:185.54px;font-size:6.6px;color:#000;transform:scaleX(0.92);transform-origin:0 0;-webkit-text-stroke:0.1px currentColor">Szafki dolne kończące</div>
<div class="t" style="left:314.5px;top:192.47px;font-size:6.6px;color:#000;transform:scaleX(0.92);transform-origin:0 0;-webkit-text-stroke:0.1px currentColor">Szafki dolne medium</div>
<div class="t" style="left:314.5px;top:199.39999999999998px;font-size:6.6px;color:#000;transform:scaleX(0.92);transform-origin:0 0;-webkit-text-stroke:0.1px currentColor">Szafki dolne medium do zabudowy AGD</div>
<div class="t" style="left:314.5px;top:206.32999999999998px;font-size:6.6px;color:#000;transform:scaleX(0.92);transform-origin:0 0;-webkit-text-stroke:0.1px currentColor">Szafki dolne narożne</div>
<div class="t" style="left:314.5px;top:213.26px;font-size:6.6px;color:#000;transform:scaleX(0.92);transform-origin:0 0;-webkit-text-stroke:0.1px currentColor">Szafki dolne pod zlewozmywak</div>
<div class="t" style="left:314.5px;top:220.19px;font-size:6.6px;color:#000;transform:scaleX(0.92);transform-origin:0 0;-webkit-text-stroke:0.1px currentColor">Szafki dolne wysokie do jadalni</div>
<div class="t" style="left:314.5px;top:227.12px;font-size:6.6px;color:#000;transform:scaleX(0.92);transform-origin:0 0;-webkit-text-stroke:0.1px currentColor">Szafki dolne z szufladami</div>
<div class="t" style="left:314.5px;top:234.04999999999998px;font-size:6.6px;color:#000;transform:scaleX(0.92);transform-origin:0 0;-webkit-text-stroke:0.1px currentColor">Szafki i regały nastawiane</div>
<div class="t" style="left:314.5px;top:240.98px;font-size:6.6px;color:#000;transform:scaleX(0.92);transform-origin:0 0;-webkit-text-stroke:0.1px currentColor">Szafki wiszące</div>
<div class="t" style="left:314.5px;top:247.91px;font-size:6.6px;color:#000;transform:scaleX(0.92);transform-origin:0 0;-webkit-text-stroke:0.1px currentColor">Szafki wiszące - szufladki</div>
<div class="t" style="left:314.5px;top:254.83999999999997px;font-size:6.6px;color:#000;transform:scaleX(0.92);transform-origin:0 0;-webkit-text-stroke:0.1px currentColor">Szafki wiszące do zabudowy okapu</div>
<div class="t" style="left:314.5px;top:261.77px;font-size:6.6px;color:#000;transform:scaleX(0.92);transform-origin:0 0;-webkit-text-stroke:0.1px currentColor">Szafki wiszące narożne</div>
<div class="t" style="left:314.5px;top:268.7px;font-size:6.6px;color:#000;transform:scaleX(0.92);transform-origin:0 0;-webkit-text-stroke:0.1px currentColor">Szafki wiszące niskie</div>
<div class="t" style="left:314.5px;top:275.63px;font-size:6.6px;color:#000;transform:scaleX(0.92);transform-origin:0 0;-webkit-text-stroke:0.1px currentColor">Szafki wiszące niskie narożne</div>
<div class="t" style="left:314.5px;top:282.55999999999995px;font-size:6.6px;color:#000;transform:scaleX(0.92);transform-origin:0 0;-webkit-text-stroke:0.1px currentColor">Szafki wiszące niskie z szufladkami</div>
<div class="t" style="left:314.5px;top:289.49px;font-size:6.6px;color:#000;transform:scaleX(0.92);transform-origin:0 0;-webkit-text-stroke:0.1px currentColor">Szafki wiszące pawlaczowe</div>
<div class="t" style="left:314.5px;top:296.41999999999996px;font-size:6.6px;color:#000;transform:scaleX(0.92);transform-origin:0 0;-webkit-text-stroke:0.1px currentColor">Szafki wiszące wysokie</div>
<div class="t" style="left:314.5px;top:303.35px;font-size:6.6px;color:#000;transform:scaleX(0.92);transform-origin:0 0;-webkit-text-stroke:0.1px currentColor">Szafki wiszące wysokie narożne</div>
<div class="t" style="left:314.5px;top:310.28px;font-size:6.6px;color:#000;transform:scaleX(0.92);transform-origin:0 0;-webkit-text-stroke:0.1px currentColor">Szafki wiszące wysokie z szufladkami</div>
<div class="t" style="left:314.5px;top:317.21px;font-size:6.6px;color:#000;transform:scaleX(0.92);transform-origin:0 0;-webkit-text-stroke:0.1px currentColor">Szafki wiszące z szufladkami</div>
<div class="t" style="left:314.5px;top:324.14px;font-size:6.6px;color:#000;transform:scaleX(0.92);transform-origin:0 0;-webkit-text-stroke:0.1px currentColor">Szafy dolne bardzo wysokie</div>
<div class="t" style="left:314.5px;top:331.07px;font-size:6.6px;color:#000;transform:scaleX(0.92);transform-origin:0 0;-webkit-text-stroke:0.1px currentColor">Szafy dolne wysokie</div>
<div class="t" style="left:314.5px;top:338.0px;font-size:6.6px;color:#000;transform:scaleX(0.92);transform-origin:0 0;-webkit-text-stroke:0.1px currentColor">Szafy dolne wysokie i bardzo wysokie do zabudowy AGD</div>
<div class="a" style="left:0px;top:480.5px;width:1024px;height:9px;background:#f0f1f4"></div>
<div class="a" style="left:1.25px;top:481.2px;width:6.65px;height:8.4px;background:#f4f5f7;border:0.7px solid #b9bcc2"></div>
<div class="a" style="left:9.4px;top:481.2px;width:7.200000000000001px;height:8.4px;background:#f4f5f7;border:0.7px solid #b9bcc2"></div>
<div class="a" style="left:18.4px;top:481.2px;width:7.600000000000001px;height:8.4px;background:#f4f5f7;border:0.7px solid #b9bcc2"></div>
<div class="a" style="left:27.6px;top:481.2px;width:7.199999999999996px;height:8.4px;background:#f4f5f7;border:0.7px solid #b9bcc2"></div>
<div class="a" style="left:36.2px;top:481.2px;width:7.799999999999997px;height:8.4px;background:#f4f5f7;border:0.7px solid #b9bcc2"></div>
<svg style="left:1.25px;top:481.2px" width="6.6" height="8.4" viewBox="0 0 6.6 8.4"><path d="M1.7 2v4.4" stroke="#222" stroke-width="0.8"/><path d="M5.2 2L2.6 4.2 5.2 6.4z" fill="#222"/></svg>
<svg style="left:9.4px;top:481.2px" width="7.2" height="8.4" viewBox="0 0 7.2 8.4"><path d="M4.6 2L2.2 4.2 4.6 6.4z" fill="#222"/></svg>
<svg style="left:18.4px;top:481.2px" width="7.6" height="8.4" viewBox="0 0 7.6 8.4"><path d="M3 2L5.4 4.2 3 6.4z" fill="#222"/></svg>
<svg style="left:27.6px;top:481.2px" width="7.2" height="8.4" viewBox="0 0 7.2 8.4"><path d="M5.4 2v4.4" stroke="#222" stroke-width="0.8"/><path d="M2 2L4.6 4.2 2 6.4z" fill="#222"/></svg>
<svg style="left:36.2px;top:481.2px" width="7.8" height="8.4" viewBox="0 0 7.8 8.4"><path d="M3.9 1.6v5.2M1.3 4.2h5.2" stroke="#222" stroke-width="1"/></svg>
<svg style="left:40px;top:480px" width="80" height="10" viewBox="0 0 80 10"><path d="M8.2 0.7L12.5 9.3M39.5 0.7L43.7 9.3M39 9.3L41.6 4M64.8 9.3L69.1 0.7" stroke="#444" stroke-width="0.75" fill="none"/></svg>
<div class="t" style="left:55.6px;top:482.2px;font-size:6.3px;color:#3c4252;-webkit-text-stroke:0.1px currentColor">Layout1</div>
<div class="t" style="left:85.3px;top:482.0px;font-size:6.2px;color:#111;font-weight:bold">Model</div>
<div class="a" style="left:0px;top:490.5px;width:1024px;height:43.5px;background:#d5d8de"></div>
<div class="a" style="left:1.2px;top:492.5px;width:9.6px;height:41px;background:#c9cdd5"></div>
<div class="a" style="left:11px;top:492.3px;width:1013px;height:41.7px;background:#fff;border-top:0.8px solid #a0a4ab"></div>
<div class="a" style="left:11px;top:522.6px;width:1013px;height:0.9px;background:#c8c8c8"></div>
<div class="a" style="left:1015.5px;top:493px;width:8.5px;height:29.5px;background:#f0f0f0"></div>
<div class="a" style="left:1018.6px;top:505px;width:0.9px;height:8.6px;background:#888"></div>
<svg style="left:2.2px;top:494.8px" width="5" height="5" viewBox="0 0 5 5"><path d="M0.5 0.5l4 4M4.5 0.5l-4 4" stroke="#333" stroke-width="0.8"/></svg>
<svg style="left:1.8px;top:506.3px" width="5.8" height="3.5" viewBox="0 0 5.8 3.5"><path d="M0 0h5.8L2.9 3.5z" fill="#222"/></svg>
<div class="t" style="left:12.4px;top:493.90000000000003px;font-size:7.17px;color:#111;font-family:'Liberation Mono',monospace;-webkit-text-stroke:0.05px currentColor">GL_VERSION SL  4.6.0 NVIDIA 471.68</div>
<div class="t" style="left:12.4px;top:501.1px;font-size:7.17px;color:#111;font-family:'Liberation Mono',monospace;-webkit-text-stroke:0.05px currentColor">:</div>
<div class="t" style="left:12.4px;top:508.7px;font-size:7.17px;color:#111;font-family:'Liberation Mono',monospace;-webkit-text-stroke:0.05px currentColor">Automatyczne zapisywanie otwartych rysunków...</div>
<div class="t" style="left:12.4px;top:515.8px;font-size:7.17px;color:#111;font-family:'Liberation Mono',monospace;-webkit-text-stroke:0.05px currentColor">:</div>
<div class="t" style="left:12.4px;top:525.4px;font-size:7.17px;color:#111;font-family:'Liberation Mono',monospace;-webkit-text-stroke:0.05px currentColor">:</div>
<div class="a" style="left:0px;top:534px;width:1024px;height:16px;background:linear-gradient(#dde0e5,#c3c7ce)"></div>
<div class="a" style="left:588.8px;top:535px;width:0.8px;height:15px;background:#b4b8bf"></div>
<div class="a" style="left:589.5999999999999px;top:535px;width:0.6px;height:15px;background:#eceef1"></div>
<div class="a" style="left:594.8px;top:535px;width:0.8px;height:15px;background:#b4b8bf"></div>
<div class="a" style="left:595.5999999999999px;top:535px;width:0.6px;height:15px;background:#eceef1"></div>
<svg style="left:598px;top:539.5px" width="8.5" height="8.5" viewBox="0 0 8.5 8.5"><path d="M4.25 0.5v7.5M0.5 4.25h7.5" stroke="#e01818" stroke-width="1.3"/></svg>
<div class="t" style="left:612.8px;top:539.1px;font-size:5.95px;color:#222;">-10439,3858,0</div>
<div class="a" style="left:670px;top:535px;width:0.8px;height:15px;background:#b4b8bf"></div>
<div class="a" style="left:670.8px;top:535px;width:0.6px;height:15px;background:#eceef1"></div>
<div class="a" style="left:673px;top:536.3px;width:12.299999999999955px;height:12.6px;background:#d6e8f9;border:0.7px solid #6aa6de"></div>
<svg style="left:675px;top:538px" width="8.5" height="9" viewBox="0 0 8.5 9"><path d="M4.2 0v9M0 4.5h8.5" stroke="#e04080" stroke-width="0.7"/><path d="M4.2 4.5v4.5" stroke="#20b0e0" stroke-width="0.8"/><circle cx="4.2" cy="4.5" r="1" fill="#e04040"/></svg>
<div class="a" style="left:687px;top:535px;width:0.8px;height:15px;background:#b4b8bf"></div>
<div class="a" style="left:687.8px;top:535px;width:0.6px;height:15px;background:#eceef1"></div>
<svg style="left:690.5px;top:538.5px" width="10.5" height="9" viewBox="0 0 10.5 9"><path d="M5.2 0.5v8M0.5 4.5h10" stroke="#e02020" stroke-width="0.8"/><path d="M5.2 0.5v4" stroke="#2a9a2a" stroke-width="0.8"/><circle cx="5.2" cy="4.5" r="1.6" fill="none" stroke="#e02020" stroke-width="0.8"/></svg>
<div class="a" style="left:702.6px;top:535px;width:0.8px;height:15px;background:#b4b8bf"></div>
<div class="a" style="left:703.4px;top:535px;width:0.6px;height:15px;background:#eceef1"></div>
<svg style="left:705.3px;top:537.5px" width="11" height="10" viewBox="0 0 11 10"><path d="M5.5 1v5M5.5 6L1 9M5.5 6L10 9" stroke="#555" stroke-width="1.5" fill="none"/><path d="M5.5 1.5L7.5 7H3.5z" fill="#fff" stroke="#555" stroke-width="0.6"/></svg>
<div class="t" style="left:720px;top:538.9px;font-size:6.2px;color:#333;">1:1</div>
<div class="a" style="left:731px;top:536.3px;width:13px;height:12.6px;background:#d6e8f9;border:0.7px solid #6aa6de"></div>
<svg style="left:732px;top:537.5px" width="11" height="10" viewBox="0 0 11 10"><path d="M5.5 1v5M5.5 6L1 9M5.5 6L10 9" stroke="#555" stroke-width="1.5" fill="none"/><path d="M5.5 1.5L7.5 7H3.5z" fill="#fff" stroke="#555" stroke-width="0.6"/></svg>
<svg style="left:738px;top:542px" width="6" height="6" viewBox="0 0 6 6"><path d="M1 0.5h4v3l-2 2l-2-2z" fill="#f0c030" stroke="#b08010" stroke-width="0.4"/></svg>
<div class="a" style="left:745.5px;top:535px;width:0.8px;height:15px;background:#b4b8bf"></div>
<div class="a" style="left:746.3px;top:535px;width:0.6px;height:15px;background:#eceef1"></div>
<svg style="left:747.5px;top:537.5px" width="11" height="10" viewBox="0 0 11 10"><path d="M5.5 1v5M5.5 6L1 9M5.5 6L10 9" stroke="#555" stroke-width="1.5" fill="none"/><path d="M5.5 1.5L7.5 7H3.5z" fill="#fff" stroke="#555" stroke-width="0.6"/></svg>
<svg style="left:755px;top:538px" width="4" height="4" viewBox="0 0 4 4"><circle cx="2" cy="2" r="1.5" fill="#e0a040"/></svg>
<div class="a" style="left:763px;top:536.3px;width:12.5px;height:12.6px;background:#d6e8f9;border:0.7px solid #6aa6de"></div>
<div class="a" style="left:779.3px;top:536.3px;width:12.700000000000045px;height:12.6px;background:#d6e8f9;border:0.7px solid #6aa6de"></div>
<div class="a" style="left:795px;top:536.3px;width:12.5px;height:12.6px;background:#d6e8f9;border:0.7px solid #6aa6de"></div>
<div class="a" style="left:811px;top:536.3px;width:13px;height:12.6px;background:#d6e8f9;border:0.7px solid #6aa6de"></div>
<svg style="left:765.5px;top:538.5px" width="8" height="8.5" viewBox="0 0 8 8.5"><g fill="#444"><circle cx="4" cy="1.5" r="0.6"/><circle cx="6.5" cy="1.5" r="0.6"/><circle cx="4" cy="4.2" r="0.6"/><circle cx="6.5" cy="4.2" r="0.6"/><circle cx="4" cy="7" r="0.6"/><circle cx="6.5" cy="7" r="0.6"/></g><circle cx="1.5" cy="7" r="1" fill="#e02020"/></svg>
<svg style="left:781.5px;top:538.3px" width="8.5" height="9" viewBox="0 0 8.5 9"><path d="M2 0v9M4.2 0v9M6.4 0v9M0 2h8.5M0 4.5h8.5M0 7h8.5" stroke="#555" stroke-width="0.7"/></svg>
<svg style="left:797px;top:538.5px" width="9" height="8.5" viewBox="0 0 9 8.5"><path d="M2.5 0.5v3M1 2h3" stroke="#444" stroke-width="0.7"/><rect x="3.5" y="4.5" width="5" height="2.2" fill="#222"/></svg>
<svg style="left:813px;top:538.3px" width="9.5" height="9" viewBox="0 0 9.5 9"><path d="M1.5 0v8.5" stroke="#30a030" stroke-width="0.8"/><path d="M1.5 8.5h8" stroke="#e06060" stroke-width="0.8"/><path d="M1.5 5h3.5v3.5" stroke="#444" stroke-width="0.7" fill="none"/></svg>
<svg style="left:829px;top:538.5px" width="9.5" height="9.5" viewBox="0 0 9.5 9.5"><circle cx="4.5" cy="5" r="3.6" fill="none" stroke="#444" stroke-width="0.9"/><path d="M4.5 5l4-2.5" stroke="#e02020" stroke-width="0.9"/></svg>
<div class="a" style="left:843px;top:536.3px;width:12.5px;height:12.6px;background:#d6e8f9;border:0.7px solid #6aa6de"></div>
<div class="a" style="left:859px;top:536.3px;width:13px;height:12.6px;background:#d6e8f9;border:0.7px solid #6aa6de"></div>
<div class="a" style="left:875px;top:536.3px;width:13px;height:12.6px;background:#d6e8f9;border:0.7px solid #6aa6de"></div>
<svg style="left:845.5px;top:538.3px" width="8.5" height="9" viewBox="0 0 8.5 9"><rect x="1.5" y="1.5" width="6.5" height="7" fill="none" stroke="#444" stroke-width="0.8"/><circle cx="2" cy="2" r="1.5" fill="#fff" stroke="#e02020" stroke-width="0.8"/></svg>
<svg style="left:861px;top:538.3px" width="9" height="9" viewBox="0 0 9 9"><path d="M1 8.5h7.5M1 8.5L8 1.5" stroke="#444" stroke-width="0.9"/></svg>
<svg style="left:877px;top:538.3px" width="9" height="9" viewBox="0 0 9 9"><path d="M1 1.5h7.5M1 4.2h7.5M1 7h7.5" stroke="#333" stroke-width="1.3"/></svg>
<div class="a" style="left:889.5px;top:535px;width:0.8px;height:15px;background:#b4b8bf"></div>
<div class="a" style="left:890.3px;top:535px;width:0.6px;height:15px;background:#eceef1"></div>
<div class="t" style="left:891.2px;top:539.2px;font-size:5.6px;color:#555;font-weight:bold">MODEL</div>
<div class="a" style="left:912.5px;top:535px;width:0.8px;height:15px;background:#b4b8bf"></div>
<div class="a" style="left:913.3px;top:535px;width:0.6px;height:15px;background:#eceef1"></div>
<div class="t" style="left:914.3px;top:539.4px;font-size:5.1px;color:#b0b3b8;font-weight:bold">TABLET</div>
<div class="a" style="left:935.5px;top:535px;width:0.8px;height:15px;background:#b4b8bf"></div>
<div class="a" style="left:936.3px;top:535px;width:0.6px;height:15px;background:#eceef1"></div>
<svg style="left:937.8px;top:537.7px" width="11" height="11" viewBox="0 0 11 11"><circle cx="5.5" cy="5.5" r="3.3" fill="none" stroke="#1f6fd0" stroke-width="2.2"/><path d="M5.5 0.3v2M5.5 8.7v2M0.3 5.5h2M8.7 5.5h2M1.8 1.8l1.4 1.4M7.8 7.8l1.4 1.4M1.8 9.2l1.4-1.4M7.8 3.2l1.4-1.4" stroke="#1f6fd0" stroke-width="1.8"/></svg>
<div class="a" style="left:952.5px;top:535px;width:0.8px;height:15px;background:#b4b8bf"></div>
<div class="a" style="left:953.3px;top:535px;width:0.6px;height:15px;background:#eceef1"></div>
<svg style="left:955.5px;top:537.5px" width="8" height="11" viewBox="0 0 8 11"><circle cx="4" cy="3.2" r="2.3" fill="none" stroke="#333" stroke-width="1.3"/><path d="M2 5.5L1 10l3-1.5L7 10 6 5.5" fill="#333"/></svg>
<div class="a" style="left:968.3px;top:535px;width:0.8px;height:15px;background:#b4b8bf"></div>
<div class="a" style="left:969.0999999999999px;top:535px;width:0.6px;height:15px;background:#eceef1"></div>
<svg style="left:970.8px;top:538px" width="9.5" height="9.5" viewBox="0 0 9.5 9.5"><rect x="0.5" y="0.5" width="8.5" height="6.5" fill="#fff" stroke="#3a7ac8" stroke-width="0.9"/><path d="M2 5l2-1.5 2 1 2-2.5" stroke="#555" stroke-width="0.7" fill="none"/><path d="M2.5 9h4.5L4.7 7z" fill="#3a7ac8"/></svg>
<div class="a" style="left:983.8px;top:535px;width:0.8px;height:15px;background:#b4b8bf"></div>
<div class="a" style="left:984.5999999999999px;top:535px;width:0.6px;height:15px;background:#eceef1"></div>
<svg style="left:986px;top:537.7px" width="11.5" height="11" viewBox="0 0 11.5 11"><rect x="0.5" y="0.5" width="7" height="5.5" fill="#fff" stroke="#333" stroke-width="0.9"/><rect x="3.5" y="4" width="7.5" height="6.5" fill="#fff" stroke="#333" stroke-width="0.9"/><path d="M3.5 4.5h7.5" stroke="#3a7ac8" stroke-width="1.3"/><path d="M0.5 1h7" stroke="#3a7ac8" stroke-width="1.2"/></svg>
<div class="a" style="left:999.6px;top:535px;width:0.8px;height:15px;background:#b4b8bf"></div>
<div class="a" style="left:1000.4px;top:535px;width:0.6px;height:15px;background:#eceef1"></div>
<svg style="left:1002.8px;top:538px" width="9.5" height="9.5" viewBox="0 0 9.5 9.5"><circle cx="4.75" cy="4.75" r="4" fill="#fff" stroke="#333" stroke-width="0.9"/><path d="M4.75 2v5.5" stroke="#2a7ad8" stroke-width="1.1"/></svg>
<div class="a" style="left:1015.5px;top:535px;width:0.8px;height:15px;background:#b4b8bf"></div>
<div class="a" style="left:1016.3px;top:535px;width:0.6px;height:15px;background:#eceef1"></div>
<svg style="left:1017px;top:542px" width="7" height="8" viewBox="0 0 7 8"><g fill="#9a9ea5"><rect x="5" y="1" width="1" height="1"/><rect x="3" y="3" width="1" height="1"/><rect x="5" y="3" width="1" height="1"/><rect x="1" y="5" width="1" height="1"/><rect x="3" y="5" width="1" height="1"/><rect x="5" y="5" width="1" height="1"/></g></svg>
</body></html>
